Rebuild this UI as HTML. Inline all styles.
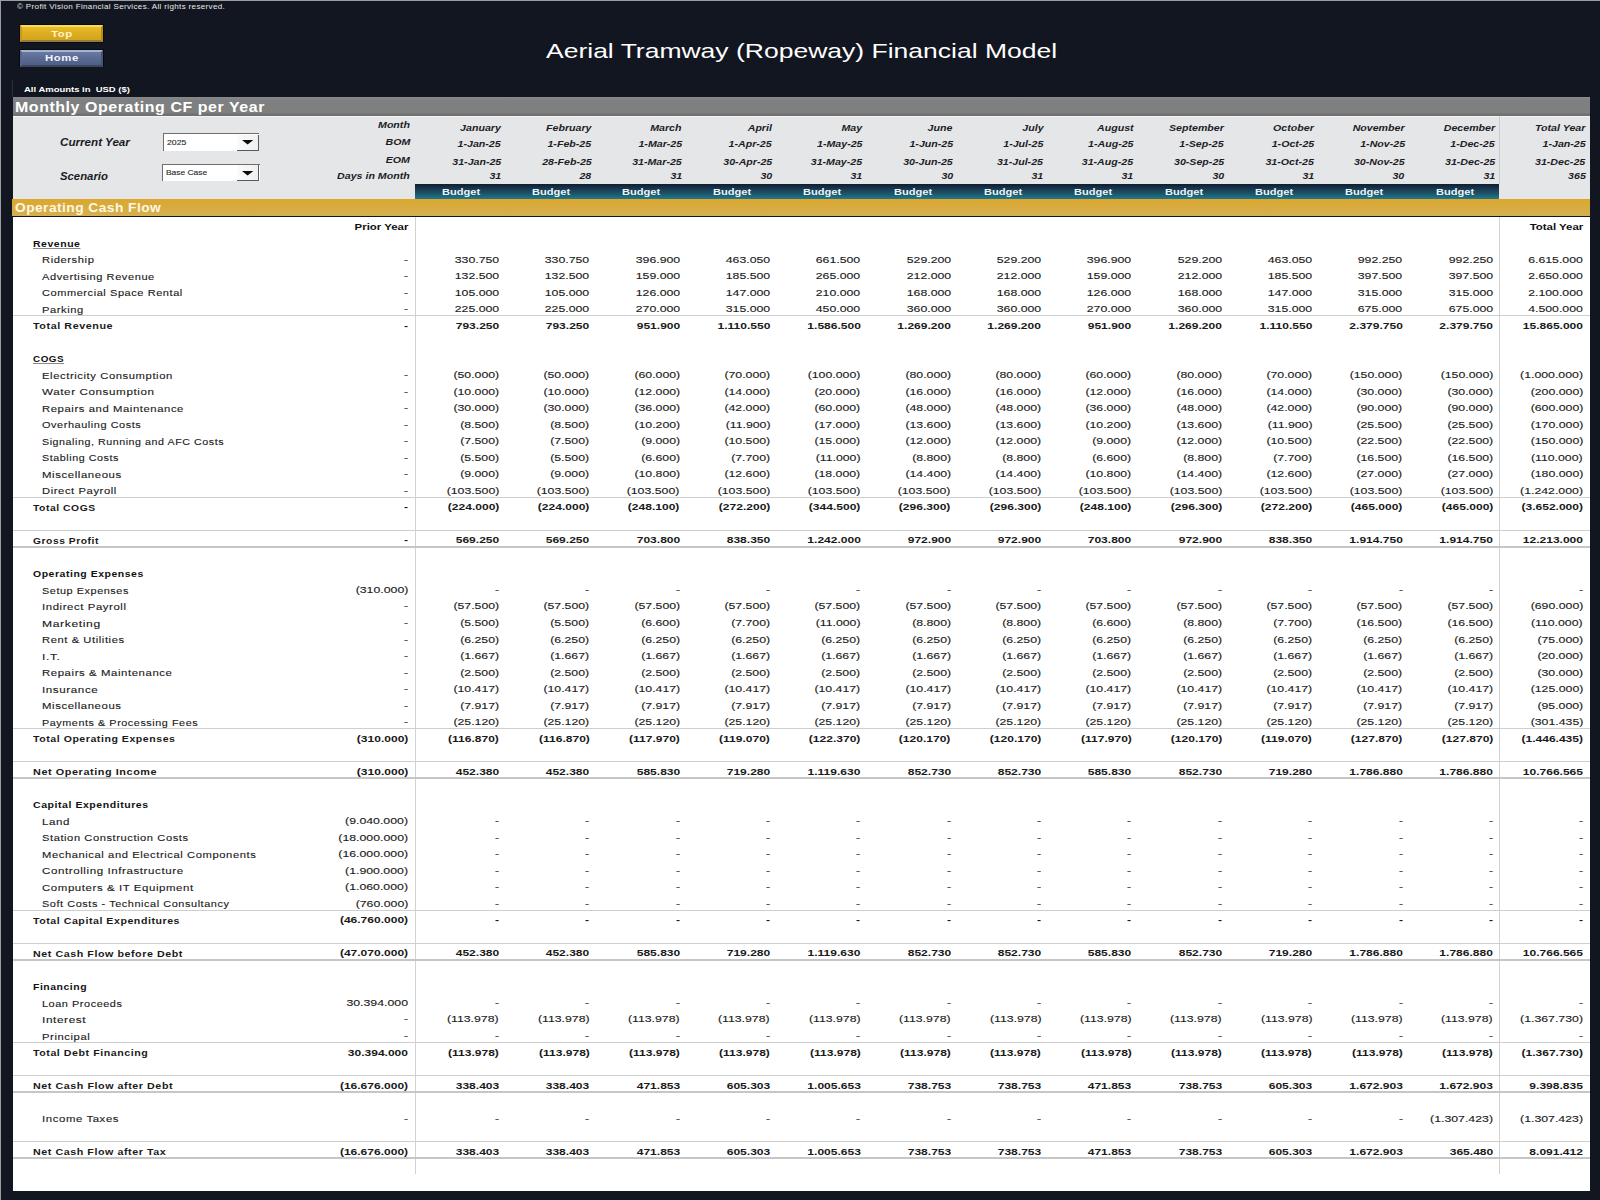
<!DOCTYPE html>
<html><head><meta charset="utf-8"><style>
html,body{margin:0;padding:0;}
body{width:1600px;height:1200px;position:relative;overflow:hidden;background:#121620;font-family:"Liberation Sans", sans-serif;}
.t{position:absolute;white-space:nowrap;}
.s{-webkit-text-stroke:0.12px currentColor;}
.b{position:absolute;}
</style></head><body>
<div class="b" style="left:0px;top:0px;width:1600px;height:1px;background:#9a9ca0;"></div>
<div class="b" style="left:0px;top:0px;width:1px;height:1200px;background:#9a9ca0;"></div>
<div class="t" style="top:2.85px;left:17.00px;transform-origin:0 50%;transform:scaleX(1.148);font-size:7px;line-height:8.05px;color:#e8e8e8;letter-spacing:0.3px">&copy; Profit Vision Financial Services. All rights reserved.</div>
<div class="b" style="left:19px;top:23.5px;width:85px;height:19.0px;background:#0a0a0a;"></div>
<div class="b" style="left:20px;top:24.5px;width:83px;height:17.5px;background:linear-gradient(#e8bc2a,#dcae20 50%,#d4a41c);box-sizing:border-box;border-top:2.5px solid #f6dc5c;border-bottom:2.5px solid #8e7c44;border-left:2.5px solid #c99a1a;border-right:2.5px solid #b88c18"></div>
<div class="t" style="top:28.71px;left:62.20px;transform-origin:50% 50%;transform:translateX(-50%) scaleX(1.250);font-size:9px;line-height:10.35px;color:#fff4c8;font-weight:bold;letter-spacing:0.5px">Top</div>
<div class="b" style="left:19px;top:49px;width:85px;height:18px;background:#0a0a0a;"></div>
<div class="b" style="left:20px;top:49.5px;width:83px;height:17.0px;background:linear-gradient(#6a7aa2,#5a6a92 50%,#4e5e86);box-sizing:border-box;border-top:2.5px solid #a4b4d6;border-bottom:2.5px solid #3a465e;border-left:2.5px solid #56668e;border-right:2.5px solid #46547a"></div>
<div class="t" style="top:53.31px;left:62.00px;transform-origin:50% 50%;transform:translateX(-50%) scaleX(1.260);font-size:9px;line-height:10.35px;color:#f4f6fc;font-weight:bold;letter-spacing:0.5px">Home</div>
<div class="t" style="top:38.72px;left:545.50px;transform-origin:0 50%;transform:scaleX(1.281);font-size:20.7px;line-height:23.80px;color:#ffffff">Aerial Tramway (Ropeway) Financial Model</div>
<div class="t" style="top:86.00px;left:23.50px;transform-origin:0 50%;transform:scaleX(1.247);font-size:7.6px;line-height:8.74px;color:#ffffff;font-weight:bold">All Amounts in&nbsp; USD ($)</div>
<div class="b" style="left:12px;top:80px;width:1px;height:17px;background:#2a2f3a;"></div>
<div class="b" style="left:13px;top:97px;width:1577px;height:19px;background:linear-gradient(#88898c 0,#7e7f80 20%,#7f7f7f 85%,#6f6f6f 90%,#727272 100%);"></div>
<div class="b" style="left:13px;top:116px;width:1577px;height:1px;background:#f4f4f6;"></div>
<div class="t" style="top:99.40px;left:15.20px;transform-origin:0 50%;transform:scaleX(1.138);font-size:14px;line-height:16.10px;color:#ffffff;font-weight:bold;letter-spacing:0.5px">Monthly Operating CF per Year</div>
<div class="b" style="left:13px;top:117px;width:1577px;height:82px;background:#e5e6e8;"></div>
<div class="b" style="left:414.5px;top:184px;width:1084.5px;height:14.800000000000011px;background:linear-gradient(#0f1e30 0,#1a3b52 35%,#1d5a70 70%,#217a8c 100%);"></div>
<div class="b" style="left:1499px;top:116px;width:1px;height:68px;background:#c9cbcf;"></div>
<div class="b" style="left:12px;top:199px;width:1578px;height:17.400000000000006px;background:linear-gradient(#dba72e,#d4b053);"></div>
<div class="t" style="top:201.74px;left:15.20px;transform-origin:0 50%;transform:scaleX(1.146);font-size:12px;line-height:13.80px;color:#fff8e0;font-weight:bold;letter-spacing:0.4px">Operating Cash Flow</div>
<div class="b" style="left:13px;top:216.5px;width:1577px;height:974.5px;background:#ffffff;"></div>
<div class="t" style="top:136.78px;left:59.80px;transform-origin:0 50%;transform:scaleX(1.164);font-size:10px;line-height:11.50px;color:#1b1b24;font-weight:bold;font-style:italic">Current Year</div>
<div class="t" style="top:170.78px;left:59.80px;transform-origin:0 50%;transform:scaleX(1.133);font-size:10px;line-height:11.50px;color:#1b1b24;font-weight:bold;font-style:italic">Scenario</div>
<div class="b" style="left:162.6px;top:133.2px;width:96.9px;height:18.200000000000017px;background:#ffffff;box-sizing:border-box;border-top:1.3px solid #6e6e6e;border-left:1.3px solid #6e6e6e"></div>
<div class="b" style="left:236.8px;top:134.5px;width:22.69999999999999px;height:16.900000000000006px;background:linear-gradient(90deg,#fafafa,#f0f0f0);box-sizing:border-box;border-right:1.5px solid #5a5a5a;border-bottom:1.5px solid #5a5a5a"></div>
<svg class="b" style="left:242px;top:140.4px" width="12" height="6"><polygon points="0,0 11.3,0 5.65,4.6" fill="#0a0a0a"/></svg>
<div class="t s" style="top:138.91px;left:166.80px;transform-origin:0 50%;transform:scaleX(1.120);font-size:7.8px;line-height:8.97px;color:#2a2a2a">2025</div>
<div class="b" style="left:161.5px;top:163.7px;width:98.0px;height:17.600000000000023px;background:#ffffff;box-sizing:border-box;border-top:1.3px solid #6e6e6e;border-left:1.3px solid #6e6e6e"></div>
<div class="b" style="left:236.8px;top:165.0px;width:22.69999999999999px;height:16.30000000000001px;background:linear-gradient(90deg,#fafafa,#f0f0f0);box-sizing:border-box;border-right:1.5px solid #5a5a5a;border-bottom:1.5px solid #5a5a5a"></div>
<svg class="b" style="left:242px;top:170.6px" width="12" height="6"><polygon points="0,0 11.3,0 5.65,4.6" fill="#0a0a0a"/></svg>
<div class="t s" style="top:169.31px;left:165.70px;transform-origin:0 50%;transform:scaleX(1.080);font-size:7.8px;line-height:8.97px;color:#2a2a2a">Base Case</div>
<div class="t" style="top:121.15px;right:1190.00px;transform-origin:100% 50%;transform:scaleX(1.280);font-size:8.3px;line-height:9.54px;color:#1d1d26;font-weight:bold;font-style:italic">Month</div>
<div class="t" style="top:123.65px;right:1099.00px;transform-origin:100% 50%;transform:scaleX(1.280);font-size:8.3px;line-height:9.54px;color:#1d1d26;font-weight:bold;font-style:italic">January</div>
<div class="t" style="top:123.65px;right:1008.64px;transform-origin:100% 50%;transform:scaleX(1.280);font-size:8.3px;line-height:9.54px;color:#1d1d26;font-weight:bold;font-style:italic">February</div>
<div class="t" style="top:123.65px;right:918.28px;transform-origin:100% 50%;transform:scaleX(1.280);font-size:8.3px;line-height:9.54px;color:#1d1d26;font-weight:bold;font-style:italic">March</div>
<div class="t" style="top:123.65px;right:827.92px;transform-origin:100% 50%;transform:scaleX(1.280);font-size:8.3px;line-height:9.54px;color:#1d1d26;font-weight:bold;font-style:italic">April</div>
<div class="t" style="top:123.65px;right:737.56px;transform-origin:100% 50%;transform:scaleX(1.280);font-size:8.3px;line-height:9.54px;color:#1d1d26;font-weight:bold;font-style:italic">May</div>
<div class="t" style="top:123.65px;right:647.20px;transform-origin:100% 50%;transform:scaleX(1.280);font-size:8.3px;line-height:9.54px;color:#1d1d26;font-weight:bold;font-style:italic">June</div>
<div class="t" style="top:123.65px;right:556.84px;transform-origin:100% 50%;transform:scaleX(1.280);font-size:8.3px;line-height:9.54px;color:#1d1d26;font-weight:bold;font-style:italic">July</div>
<div class="t" style="top:123.65px;right:466.48px;transform-origin:100% 50%;transform:scaleX(1.280);font-size:8.3px;line-height:9.54px;color:#1d1d26;font-weight:bold;font-style:italic">August</div>
<div class="t" style="top:123.65px;right:376.12px;transform-origin:100% 50%;transform:scaleX(1.280);font-size:8.3px;line-height:9.54px;color:#1d1d26;font-weight:bold;font-style:italic">September</div>
<div class="t" style="top:123.65px;right:285.76px;transform-origin:100% 50%;transform:scaleX(1.280);font-size:8.3px;line-height:9.54px;color:#1d1d26;font-weight:bold;font-style:italic">October</div>
<div class="t" style="top:123.65px;right:195.40px;transform-origin:100% 50%;transform:scaleX(1.280);font-size:8.3px;line-height:9.54px;color:#1d1d26;font-weight:bold;font-style:italic">November</div>
<div class="t" style="top:123.65px;right:105.04px;transform-origin:100% 50%;transform:scaleX(1.280);font-size:8.3px;line-height:9.54px;color:#1d1d26;font-weight:bold;font-style:italic">December</div>
<div class="t" style="top:123.65px;right:14.50px;transform-origin:100% 50%;transform:scaleX(1.280);font-size:8.3px;line-height:9.54px;color:#1d1d26;font-weight:bold;font-style:italic">Total Year</div>
<div class="t" style="top:138.45px;right:1190.00px;transform-origin:100% 50%;transform:scaleX(1.280);font-size:8.3px;line-height:9.54px;color:#1d1d26;font-weight:bold;font-style:italic">BOM</div>
<div class="t" style="top:139.95px;right:1099.00px;transform-origin:100% 50%;transform:scaleX(1.280);font-size:8.3px;line-height:9.54px;color:#1d1d26;font-weight:bold;font-style:italic">1-Jan-25</div>
<div class="t" style="top:139.95px;right:1008.64px;transform-origin:100% 50%;transform:scaleX(1.280);font-size:8.3px;line-height:9.54px;color:#1d1d26;font-weight:bold;font-style:italic">1-Feb-25</div>
<div class="t" style="top:139.95px;right:918.28px;transform-origin:100% 50%;transform:scaleX(1.280);font-size:8.3px;line-height:9.54px;color:#1d1d26;font-weight:bold;font-style:italic">1-Mar-25</div>
<div class="t" style="top:139.95px;right:827.92px;transform-origin:100% 50%;transform:scaleX(1.280);font-size:8.3px;line-height:9.54px;color:#1d1d26;font-weight:bold;font-style:italic">1-Apr-25</div>
<div class="t" style="top:139.95px;right:737.56px;transform-origin:100% 50%;transform:scaleX(1.280);font-size:8.3px;line-height:9.54px;color:#1d1d26;font-weight:bold;font-style:italic">1-May-25</div>
<div class="t" style="top:139.95px;right:647.20px;transform-origin:100% 50%;transform:scaleX(1.280);font-size:8.3px;line-height:9.54px;color:#1d1d26;font-weight:bold;font-style:italic">1-Jun-25</div>
<div class="t" style="top:139.95px;right:556.84px;transform-origin:100% 50%;transform:scaleX(1.280);font-size:8.3px;line-height:9.54px;color:#1d1d26;font-weight:bold;font-style:italic">1-Jul-25</div>
<div class="t" style="top:139.95px;right:466.48px;transform-origin:100% 50%;transform:scaleX(1.280);font-size:8.3px;line-height:9.54px;color:#1d1d26;font-weight:bold;font-style:italic">1-Aug-25</div>
<div class="t" style="top:139.95px;right:376.12px;transform-origin:100% 50%;transform:scaleX(1.280);font-size:8.3px;line-height:9.54px;color:#1d1d26;font-weight:bold;font-style:italic">1-Sep-25</div>
<div class="t" style="top:139.95px;right:285.76px;transform-origin:100% 50%;transform:scaleX(1.280);font-size:8.3px;line-height:9.54px;color:#1d1d26;font-weight:bold;font-style:italic">1-Oct-25</div>
<div class="t" style="top:139.95px;right:195.40px;transform-origin:100% 50%;transform:scaleX(1.280);font-size:8.3px;line-height:9.54px;color:#1d1d26;font-weight:bold;font-style:italic">1-Nov-25</div>
<div class="t" style="top:139.95px;right:105.04px;transform-origin:100% 50%;transform:scaleX(1.280);font-size:8.3px;line-height:9.54px;color:#1d1d26;font-weight:bold;font-style:italic">1-Dec-25</div>
<div class="t" style="top:139.95px;right:14.50px;transform-origin:100% 50%;transform:scaleX(1.280);font-size:8.3px;line-height:9.54px;color:#1d1d26;font-weight:bold;font-style:italic">1-Jan-25</div>
<div class="t" style="top:155.55px;right:1190.00px;transform-origin:100% 50%;transform:scaleX(1.280);font-size:8.3px;line-height:9.54px;color:#1d1d26;font-weight:bold;font-style:italic">EOM</div>
<div class="t" style="top:157.65px;right:1099.00px;transform-origin:100% 50%;transform:scaleX(1.280);font-size:8.3px;line-height:9.54px;color:#1d1d26;font-weight:bold;font-style:italic">31-Jan-25</div>
<div class="t" style="top:157.65px;right:1008.64px;transform-origin:100% 50%;transform:scaleX(1.280);font-size:8.3px;line-height:9.54px;color:#1d1d26;font-weight:bold;font-style:italic">28-Feb-25</div>
<div class="t" style="top:157.65px;right:918.28px;transform-origin:100% 50%;transform:scaleX(1.280);font-size:8.3px;line-height:9.54px;color:#1d1d26;font-weight:bold;font-style:italic">31-Mar-25</div>
<div class="t" style="top:157.65px;right:827.92px;transform-origin:100% 50%;transform:scaleX(1.280);font-size:8.3px;line-height:9.54px;color:#1d1d26;font-weight:bold;font-style:italic">30-Apr-25</div>
<div class="t" style="top:157.65px;right:737.56px;transform-origin:100% 50%;transform:scaleX(1.280);font-size:8.3px;line-height:9.54px;color:#1d1d26;font-weight:bold;font-style:italic">31-May-25</div>
<div class="t" style="top:157.65px;right:647.20px;transform-origin:100% 50%;transform:scaleX(1.280);font-size:8.3px;line-height:9.54px;color:#1d1d26;font-weight:bold;font-style:italic">30-Jun-25</div>
<div class="t" style="top:157.65px;right:556.84px;transform-origin:100% 50%;transform:scaleX(1.280);font-size:8.3px;line-height:9.54px;color:#1d1d26;font-weight:bold;font-style:italic">31-Jul-25</div>
<div class="t" style="top:157.65px;right:466.48px;transform-origin:100% 50%;transform:scaleX(1.280);font-size:8.3px;line-height:9.54px;color:#1d1d26;font-weight:bold;font-style:italic">31-Aug-25</div>
<div class="t" style="top:157.65px;right:376.12px;transform-origin:100% 50%;transform:scaleX(1.280);font-size:8.3px;line-height:9.54px;color:#1d1d26;font-weight:bold;font-style:italic">30-Sep-25</div>
<div class="t" style="top:157.65px;right:285.76px;transform-origin:100% 50%;transform:scaleX(1.280);font-size:8.3px;line-height:9.54px;color:#1d1d26;font-weight:bold;font-style:italic">31-Oct-25</div>
<div class="t" style="top:157.65px;right:195.40px;transform-origin:100% 50%;transform:scaleX(1.280);font-size:8.3px;line-height:9.54px;color:#1d1d26;font-weight:bold;font-style:italic">30-Nov-25</div>
<div class="t" style="top:157.65px;right:105.04px;transform-origin:100% 50%;transform:scaleX(1.280);font-size:8.3px;line-height:9.54px;color:#1d1d26;font-weight:bold;font-style:italic">31-Dec-25</div>
<div class="t" style="top:157.65px;right:14.50px;transform-origin:100% 50%;transform:scaleX(1.280);font-size:8.3px;line-height:9.54px;color:#1d1d26;font-weight:bold;font-style:italic">31-Dec-25</div>
<div class="t" style="top:172.05px;right:1190.00px;transform-origin:100% 50%;transform:scaleX(1.280);font-size:8.3px;line-height:9.54px;color:#1d1d26;font-weight:bold;font-style:italic">Days in Month</div>
<div class="t" style="top:172.45px;right:1099.00px;transform-origin:100% 50%;transform:scaleX(1.280);font-size:8.3px;line-height:9.54px;color:#1d1d26;font-weight:bold;font-style:italic">31</div>
<div class="t" style="top:172.45px;right:1008.64px;transform-origin:100% 50%;transform:scaleX(1.280);font-size:8.3px;line-height:9.54px;color:#1d1d26;font-weight:bold;font-style:italic">28</div>
<div class="t" style="top:172.45px;right:918.28px;transform-origin:100% 50%;transform:scaleX(1.280);font-size:8.3px;line-height:9.54px;color:#1d1d26;font-weight:bold;font-style:italic">31</div>
<div class="t" style="top:172.45px;right:827.92px;transform-origin:100% 50%;transform:scaleX(1.280);font-size:8.3px;line-height:9.54px;color:#1d1d26;font-weight:bold;font-style:italic">30</div>
<div class="t" style="top:172.45px;right:737.56px;transform-origin:100% 50%;transform:scaleX(1.280);font-size:8.3px;line-height:9.54px;color:#1d1d26;font-weight:bold;font-style:italic">31</div>
<div class="t" style="top:172.45px;right:647.20px;transform-origin:100% 50%;transform:scaleX(1.280);font-size:8.3px;line-height:9.54px;color:#1d1d26;font-weight:bold;font-style:italic">30</div>
<div class="t" style="top:172.45px;right:556.84px;transform-origin:100% 50%;transform:scaleX(1.280);font-size:8.3px;line-height:9.54px;color:#1d1d26;font-weight:bold;font-style:italic">31</div>
<div class="t" style="top:172.45px;right:466.48px;transform-origin:100% 50%;transform:scaleX(1.280);font-size:8.3px;line-height:9.54px;color:#1d1d26;font-weight:bold;font-style:italic">31</div>
<div class="t" style="top:172.45px;right:376.12px;transform-origin:100% 50%;transform:scaleX(1.280);font-size:8.3px;line-height:9.54px;color:#1d1d26;font-weight:bold;font-style:italic">30</div>
<div class="t" style="top:172.45px;right:285.76px;transform-origin:100% 50%;transform:scaleX(1.280);font-size:8.3px;line-height:9.54px;color:#1d1d26;font-weight:bold;font-style:italic">31</div>
<div class="t" style="top:172.45px;right:195.40px;transform-origin:100% 50%;transform:scaleX(1.280);font-size:8.3px;line-height:9.54px;color:#1d1d26;font-weight:bold;font-style:italic">30</div>
<div class="t" style="top:172.45px;right:105.04px;transform-origin:100% 50%;transform:scaleX(1.280);font-size:8.3px;line-height:9.54px;color:#1d1d26;font-weight:bold;font-style:italic">31</div>
<div class="t" style="top:172.45px;right:14.50px;transform-origin:100% 50%;transform:scaleX(1.280);font-size:8.3px;line-height:9.54px;color:#1d1d26;font-weight:bold;font-style:italic">365</div>
<div class="t" style="top:187.31px;left:460.75px;transform-origin:50% 50%;transform:translateX(-50%) scaleX(1.232);font-size:9px;line-height:10.35px;color:#e8f4f8;font-weight:bold">Budget</div>
<div class="t" style="top:187.31px;left:551.11px;transform-origin:50% 50%;transform:translateX(-50%) scaleX(1.232);font-size:9px;line-height:10.35px;color:#e8f4f8;font-weight:bold">Budget</div>
<div class="t" style="top:187.31px;left:641.47px;transform-origin:50% 50%;transform:translateX(-50%) scaleX(1.232);font-size:9px;line-height:10.35px;color:#e8f4f8;font-weight:bold">Budget</div>
<div class="t" style="top:187.31px;left:731.83px;transform-origin:50% 50%;transform:translateX(-50%) scaleX(1.232);font-size:9px;line-height:10.35px;color:#e8f4f8;font-weight:bold">Budget</div>
<div class="t" style="top:187.31px;left:822.19px;transform-origin:50% 50%;transform:translateX(-50%) scaleX(1.232);font-size:9px;line-height:10.35px;color:#e8f4f8;font-weight:bold">Budget</div>
<div class="t" style="top:187.31px;left:912.55px;transform-origin:50% 50%;transform:translateX(-50%) scaleX(1.232);font-size:9px;line-height:10.35px;color:#e8f4f8;font-weight:bold">Budget</div>
<div class="t" style="top:187.31px;left:1002.91px;transform-origin:50% 50%;transform:translateX(-50%) scaleX(1.232);font-size:9px;line-height:10.35px;color:#e8f4f8;font-weight:bold">Budget</div>
<div class="t" style="top:187.31px;left:1093.27px;transform-origin:50% 50%;transform:translateX(-50%) scaleX(1.232);font-size:9px;line-height:10.35px;color:#e8f4f8;font-weight:bold">Budget</div>
<div class="t" style="top:187.31px;left:1183.63px;transform-origin:50% 50%;transform:translateX(-50%) scaleX(1.232);font-size:9px;line-height:10.35px;color:#e8f4f8;font-weight:bold">Budget</div>
<div class="t" style="top:187.31px;left:1273.99px;transform-origin:50% 50%;transform:translateX(-50%) scaleX(1.232);font-size:9px;line-height:10.35px;color:#e8f4f8;font-weight:bold">Budget</div>
<div class="t" style="top:187.31px;left:1364.35px;transform-origin:50% 50%;transform:translateX(-50%) scaleX(1.232);font-size:9px;line-height:10.35px;color:#e8f4f8;font-weight:bold">Budget</div>
<div class="t" style="top:187.31px;left:1454.71px;transform-origin:50% 50%;transform:translateX(-50%) scaleX(1.232);font-size:9px;line-height:10.35px;color:#e8f4f8;font-weight:bold">Budget</div>
<div class="b" style="left:414.5px;top:216.5px;width:1.5px;height:957.5px;background:#d2d2d2;"></div>
<div class="b" style="left:1498.5px;top:216.5px;width:1.5px;height:957.5px;background:#d2d2d2;"></div>
<div class="b" style="left:13px;top:315.02px;width:1577px;height:1.0px;background:#cfcfcf;"></div>
<div class="b" style="left:13px;top:496.74px;width:1577px;height:1.0px;background:#cfcfcf;"></div>
<div class="b" style="left:13px;top:529.78px;width:1577px;height:1.0px;background:#cfcfcf;"></div>
<div class="b" style="left:13px;top:728.02px;width:1577px;height:1.0px;background:#cfcfcf;"></div>
<div class="b" style="left:13px;top:761.06px;width:1577px;height:1.0px;background:#cfcfcf;"></div>
<div class="b" style="left:13px;top:909.74px;width:1577px;height:1.0px;background:#cfcfcf;"></div>
<div class="b" style="left:13px;top:942.78px;width:1577px;height:1.0px;background:#cfcfcf;"></div>
<div class="b" style="left:13px;top:1041.9px;width:1577px;height:1.0px;background:#cfcfcf;"></div>
<div class="b" style="left:13px;top:1074.94px;width:1577px;height:1.0px;background:#cfcfcf;"></div>
<div class="b" style="left:13px;top:1141.02px;width:1577px;height:1.0px;background:#cfcfcf;"></div>
<div class="b" style="left:13px;top:545.8px;width:1577px;height:2.0px;background:#c6c6c6;"></div>
<div class="b" style="left:13px;top:777.0799999999999px;width:1577px;height:2.0px;background:#c6c6c6;"></div>
<div class="b" style="left:13px;top:958.8px;width:1577px;height:2.0px;background:#c6c6c6;"></div>
<div class="b" style="left:13px;top:1090.96px;width:1577px;height:2.0px;background:#c6c6c6;"></div>
<div class="b" style="left:13px;top:1157.04px;width:1577px;height:2.0px;background:#c6c6c6;"></div>
<div class="t" style="top:221.59px;right:1191.40px;transform-origin:100% 50%;transform:scaleX(1.300);font-size:8.8px;line-height:10.12px;color:#111;font-weight:bold">Prior Year</div>
<div class="t" style="top:221.59px;right:16.40px;transform-origin:100% 50%;transform:scaleX(1.300);font-size:8.8px;line-height:10.12px;color:#111;font-weight:bold">Total Year</div>
<div class="t" style="top:237.67px;left:33.00px;transform-origin:0 50%;transform:scaleX(1.091);font-size:9.6px;line-height:11.04px;color:#111;font-weight:bold;letter-spacing:0.5px;text-decoration:underline;text-decoration-color:#8a8a8a;text-decoration-thickness:1px;text-underline-offset:1px">Revenue</div>
<div class="t s" style="top:254.19px;left:42.00px;transform-origin:0 50%;transform:scaleX(1.165);font-size:9.6px;line-height:11.04px;color:#1a1a1a;letter-spacing:0.5px">Ridership</div>
<div class="t s" style="top:254.56px;right:1191.70px;transform-origin:100% 50%;transform:scaleX(1.339);font-size:9.2px;line-height:10.58px;color:#4a4a4a">-</div>
<div class="t s" style="top:254.56px;right:1101.00px;transform-origin:100% 50%;transform:scaleX(1.339);font-size:9.2px;line-height:10.58px;color:#1a1a1a">330.750</div>
<div class="t s" style="top:254.56px;right:1010.64px;transform-origin:100% 50%;transform:scaleX(1.339);font-size:9.2px;line-height:10.58px;color:#1a1a1a">330.750</div>
<div class="t s" style="top:254.56px;right:920.28px;transform-origin:100% 50%;transform:scaleX(1.339);font-size:9.2px;line-height:10.58px;color:#1a1a1a">396.900</div>
<div class="t s" style="top:254.56px;right:829.92px;transform-origin:100% 50%;transform:scaleX(1.339);font-size:9.2px;line-height:10.58px;color:#1a1a1a">463.050</div>
<div class="t s" style="top:254.56px;right:739.56px;transform-origin:100% 50%;transform:scaleX(1.339);font-size:9.2px;line-height:10.58px;color:#1a1a1a">661.500</div>
<div class="t s" style="top:254.56px;right:649.20px;transform-origin:100% 50%;transform:scaleX(1.339);font-size:9.2px;line-height:10.58px;color:#1a1a1a">529.200</div>
<div class="t s" style="top:254.56px;right:558.84px;transform-origin:100% 50%;transform:scaleX(1.339);font-size:9.2px;line-height:10.58px;color:#1a1a1a">529.200</div>
<div class="t s" style="top:254.56px;right:468.48px;transform-origin:100% 50%;transform:scaleX(1.339);font-size:9.2px;line-height:10.58px;color:#1a1a1a">396.900</div>
<div class="t s" style="top:254.56px;right:378.12px;transform-origin:100% 50%;transform:scaleX(1.339);font-size:9.2px;line-height:10.58px;color:#1a1a1a">529.200</div>
<div class="t s" style="top:254.56px;right:287.76px;transform-origin:100% 50%;transform:scaleX(1.339);font-size:9.2px;line-height:10.58px;color:#1a1a1a">463.050</div>
<div class="t s" style="top:254.56px;right:197.40px;transform-origin:100% 50%;transform:scaleX(1.339);font-size:9.2px;line-height:10.58px;color:#1a1a1a">992.250</div>
<div class="t s" style="top:254.56px;right:107.04px;transform-origin:100% 50%;transform:scaleX(1.339);font-size:9.2px;line-height:10.58px;color:#1a1a1a">992.250</div>
<div class="t s" style="top:254.56px;right:17.00px;transform-origin:100% 50%;transform:scaleX(1.339);font-size:9.2px;line-height:10.58px;color:#1a1a1a">6.615.000</div>
<div class="t s" style="top:270.71px;left:42.00px;transform-origin:0 50%;transform:scaleX(1.151);font-size:9.6px;line-height:11.04px;color:#1a1a1a;letter-spacing:0.5px">Advertising Revenue</div>
<div class="t s" style="top:271.08px;right:1191.70px;transform-origin:100% 50%;transform:scaleX(1.339);font-size:9.2px;line-height:10.58px;color:#4a4a4a">-</div>
<div class="t s" style="top:271.08px;right:1101.00px;transform-origin:100% 50%;transform:scaleX(1.339);font-size:9.2px;line-height:10.58px;color:#1a1a1a">132.500</div>
<div class="t s" style="top:271.08px;right:1010.64px;transform-origin:100% 50%;transform:scaleX(1.339);font-size:9.2px;line-height:10.58px;color:#1a1a1a">132.500</div>
<div class="t s" style="top:271.08px;right:920.28px;transform-origin:100% 50%;transform:scaleX(1.339);font-size:9.2px;line-height:10.58px;color:#1a1a1a">159.000</div>
<div class="t s" style="top:271.08px;right:829.92px;transform-origin:100% 50%;transform:scaleX(1.339);font-size:9.2px;line-height:10.58px;color:#1a1a1a">185.500</div>
<div class="t s" style="top:271.08px;right:739.56px;transform-origin:100% 50%;transform:scaleX(1.339);font-size:9.2px;line-height:10.58px;color:#1a1a1a">265.000</div>
<div class="t s" style="top:271.08px;right:649.20px;transform-origin:100% 50%;transform:scaleX(1.339);font-size:9.2px;line-height:10.58px;color:#1a1a1a">212.000</div>
<div class="t s" style="top:271.08px;right:558.84px;transform-origin:100% 50%;transform:scaleX(1.339);font-size:9.2px;line-height:10.58px;color:#1a1a1a">212.000</div>
<div class="t s" style="top:271.08px;right:468.48px;transform-origin:100% 50%;transform:scaleX(1.339);font-size:9.2px;line-height:10.58px;color:#1a1a1a">159.000</div>
<div class="t s" style="top:271.08px;right:378.12px;transform-origin:100% 50%;transform:scaleX(1.339);font-size:9.2px;line-height:10.58px;color:#1a1a1a">212.000</div>
<div class="t s" style="top:271.08px;right:287.76px;transform-origin:100% 50%;transform:scaleX(1.339);font-size:9.2px;line-height:10.58px;color:#1a1a1a">185.500</div>
<div class="t s" style="top:271.08px;right:197.40px;transform-origin:100% 50%;transform:scaleX(1.339);font-size:9.2px;line-height:10.58px;color:#1a1a1a">397.500</div>
<div class="t s" style="top:271.08px;right:107.04px;transform-origin:100% 50%;transform:scaleX(1.339);font-size:9.2px;line-height:10.58px;color:#1a1a1a">397.500</div>
<div class="t s" style="top:271.08px;right:17.00px;transform-origin:100% 50%;transform:scaleX(1.339);font-size:9.2px;line-height:10.58px;color:#1a1a1a">2.650.000</div>
<div class="t s" style="top:287.23px;left:42.00px;transform-origin:0 50%;transform:scaleX(1.146);font-size:9.6px;line-height:11.04px;color:#1a1a1a;letter-spacing:0.5px">Commercial Space Rental</div>
<div class="t s" style="top:287.60px;right:1191.70px;transform-origin:100% 50%;transform:scaleX(1.339);font-size:9.2px;line-height:10.58px;color:#4a4a4a">-</div>
<div class="t s" style="top:287.60px;right:1101.00px;transform-origin:100% 50%;transform:scaleX(1.339);font-size:9.2px;line-height:10.58px;color:#1a1a1a">105.000</div>
<div class="t s" style="top:287.60px;right:1010.64px;transform-origin:100% 50%;transform:scaleX(1.339);font-size:9.2px;line-height:10.58px;color:#1a1a1a">105.000</div>
<div class="t s" style="top:287.60px;right:920.28px;transform-origin:100% 50%;transform:scaleX(1.339);font-size:9.2px;line-height:10.58px;color:#1a1a1a">126.000</div>
<div class="t s" style="top:287.60px;right:829.92px;transform-origin:100% 50%;transform:scaleX(1.339);font-size:9.2px;line-height:10.58px;color:#1a1a1a">147.000</div>
<div class="t s" style="top:287.60px;right:739.56px;transform-origin:100% 50%;transform:scaleX(1.339);font-size:9.2px;line-height:10.58px;color:#1a1a1a">210.000</div>
<div class="t s" style="top:287.60px;right:649.20px;transform-origin:100% 50%;transform:scaleX(1.339);font-size:9.2px;line-height:10.58px;color:#1a1a1a">168.000</div>
<div class="t s" style="top:287.60px;right:558.84px;transform-origin:100% 50%;transform:scaleX(1.339);font-size:9.2px;line-height:10.58px;color:#1a1a1a">168.000</div>
<div class="t s" style="top:287.60px;right:468.48px;transform-origin:100% 50%;transform:scaleX(1.339);font-size:9.2px;line-height:10.58px;color:#1a1a1a">126.000</div>
<div class="t s" style="top:287.60px;right:378.12px;transform-origin:100% 50%;transform:scaleX(1.339);font-size:9.2px;line-height:10.58px;color:#1a1a1a">168.000</div>
<div class="t s" style="top:287.60px;right:287.76px;transform-origin:100% 50%;transform:scaleX(1.339);font-size:9.2px;line-height:10.58px;color:#1a1a1a">147.000</div>
<div class="t s" style="top:287.60px;right:197.40px;transform-origin:100% 50%;transform:scaleX(1.339);font-size:9.2px;line-height:10.58px;color:#1a1a1a">315.000</div>
<div class="t s" style="top:287.60px;right:107.04px;transform-origin:100% 50%;transform:scaleX(1.339);font-size:9.2px;line-height:10.58px;color:#1a1a1a">315.000</div>
<div class="t s" style="top:287.60px;right:17.00px;transform-origin:100% 50%;transform:scaleX(1.339);font-size:9.2px;line-height:10.58px;color:#1a1a1a">2.100.000</div>
<div class="t s" style="top:303.75px;left:42.00px;transform-origin:0 50%;transform:scaleX(1.159);font-size:9.6px;line-height:11.04px;color:#1a1a1a;letter-spacing:0.5px">Parking</div>
<div class="t s" style="top:304.12px;right:1191.70px;transform-origin:100% 50%;transform:scaleX(1.339);font-size:9.2px;line-height:10.58px;color:#4a4a4a">-</div>
<div class="t s" style="top:304.12px;right:1101.00px;transform-origin:100% 50%;transform:scaleX(1.339);font-size:9.2px;line-height:10.58px;color:#1a1a1a">225.000</div>
<div class="t s" style="top:304.12px;right:1010.64px;transform-origin:100% 50%;transform:scaleX(1.339);font-size:9.2px;line-height:10.58px;color:#1a1a1a">225.000</div>
<div class="t s" style="top:304.12px;right:920.28px;transform-origin:100% 50%;transform:scaleX(1.339);font-size:9.2px;line-height:10.58px;color:#1a1a1a">270.000</div>
<div class="t s" style="top:304.12px;right:829.92px;transform-origin:100% 50%;transform:scaleX(1.339);font-size:9.2px;line-height:10.58px;color:#1a1a1a">315.000</div>
<div class="t s" style="top:304.12px;right:739.56px;transform-origin:100% 50%;transform:scaleX(1.339);font-size:9.2px;line-height:10.58px;color:#1a1a1a">450.000</div>
<div class="t s" style="top:304.12px;right:649.20px;transform-origin:100% 50%;transform:scaleX(1.339);font-size:9.2px;line-height:10.58px;color:#1a1a1a">360.000</div>
<div class="t s" style="top:304.12px;right:558.84px;transform-origin:100% 50%;transform:scaleX(1.339);font-size:9.2px;line-height:10.58px;color:#1a1a1a">360.000</div>
<div class="t s" style="top:304.12px;right:468.48px;transform-origin:100% 50%;transform:scaleX(1.339);font-size:9.2px;line-height:10.58px;color:#1a1a1a">270.000</div>
<div class="t s" style="top:304.12px;right:378.12px;transform-origin:100% 50%;transform:scaleX(1.339);font-size:9.2px;line-height:10.58px;color:#1a1a1a">360.000</div>
<div class="t s" style="top:304.12px;right:287.76px;transform-origin:100% 50%;transform:scaleX(1.339);font-size:9.2px;line-height:10.58px;color:#1a1a1a">315.000</div>
<div class="t s" style="top:304.12px;right:197.40px;transform-origin:100% 50%;transform:scaleX(1.339);font-size:9.2px;line-height:10.58px;color:#1a1a1a">675.000</div>
<div class="t s" style="top:304.12px;right:107.04px;transform-origin:100% 50%;transform:scaleX(1.339);font-size:9.2px;line-height:10.58px;color:#1a1a1a">675.000</div>
<div class="t s" style="top:304.12px;right:17.00px;transform-origin:100% 50%;transform:scaleX(1.339);font-size:9.2px;line-height:10.58px;color:#1a1a1a">4.500.000</div>
<div class="t" style="top:320.27px;left:33.00px;transform-origin:0 50%;transform:scaleX(1.123);font-size:9.6px;line-height:11.04px;color:#1a1a1a;font-weight:bold;letter-spacing:0.5px">Total Revenue</div>
<div class="t" style="top:320.64px;right:1191.70px;transform-origin:100% 50%;transform:scaleX(1.309);font-size:9.2px;line-height:10.58px;color:#1a1a1a;font-weight:bold">-</div>
<div class="t" style="top:320.64px;right:1101.00px;transform-origin:100% 50%;transform:scaleX(1.309);font-size:9.2px;line-height:10.58px;color:#1a1a1a;font-weight:bold">793.250</div>
<div class="t" style="top:320.64px;right:1010.64px;transform-origin:100% 50%;transform:scaleX(1.309);font-size:9.2px;line-height:10.58px;color:#1a1a1a;font-weight:bold">793.250</div>
<div class="t" style="top:320.64px;right:920.28px;transform-origin:100% 50%;transform:scaleX(1.309);font-size:9.2px;line-height:10.58px;color:#1a1a1a;font-weight:bold">951.900</div>
<div class="t" style="top:320.64px;right:829.92px;transform-origin:100% 50%;transform:scaleX(1.309);font-size:9.2px;line-height:10.58px;color:#1a1a1a;font-weight:bold">1.110.550</div>
<div class="t" style="top:320.64px;right:739.56px;transform-origin:100% 50%;transform:scaleX(1.309);font-size:9.2px;line-height:10.58px;color:#1a1a1a;font-weight:bold">1.586.500</div>
<div class="t" style="top:320.64px;right:649.20px;transform-origin:100% 50%;transform:scaleX(1.309);font-size:9.2px;line-height:10.58px;color:#1a1a1a;font-weight:bold">1.269.200</div>
<div class="t" style="top:320.64px;right:558.84px;transform-origin:100% 50%;transform:scaleX(1.309);font-size:9.2px;line-height:10.58px;color:#1a1a1a;font-weight:bold">1.269.200</div>
<div class="t" style="top:320.64px;right:468.48px;transform-origin:100% 50%;transform:scaleX(1.309);font-size:9.2px;line-height:10.58px;color:#1a1a1a;font-weight:bold">951.900</div>
<div class="t" style="top:320.64px;right:378.12px;transform-origin:100% 50%;transform:scaleX(1.309);font-size:9.2px;line-height:10.58px;color:#1a1a1a;font-weight:bold">1.269.200</div>
<div class="t" style="top:320.64px;right:287.76px;transform-origin:100% 50%;transform:scaleX(1.309);font-size:9.2px;line-height:10.58px;color:#1a1a1a;font-weight:bold">1.110.550</div>
<div class="t" style="top:320.64px;right:197.40px;transform-origin:100% 50%;transform:scaleX(1.309);font-size:9.2px;line-height:10.58px;color:#1a1a1a;font-weight:bold">2.379.750</div>
<div class="t" style="top:320.64px;right:107.04px;transform-origin:100% 50%;transform:scaleX(1.309);font-size:9.2px;line-height:10.58px;color:#1a1a1a;font-weight:bold">2.379.750</div>
<div class="t" style="top:320.64px;right:17.00px;transform-origin:100% 50%;transform:scaleX(1.309);font-size:9.2px;line-height:10.58px;color:#1a1a1a;font-weight:bold">15.865.000</div>
<div class="t" style="top:353.31px;left:33.00px;transform-origin:0 50%;transform:scaleX(1.029);font-size:9.6px;line-height:11.04px;color:#111;font-weight:bold;letter-spacing:0.5px;text-decoration:underline;text-decoration-color:#8a8a8a;text-decoration-thickness:1px;text-underline-offset:1px">COGS</div>
<div class="t s" style="top:369.83px;left:42.00px;transform-origin:0 50%;transform:scaleX(1.171);font-size:9.6px;line-height:11.04px;color:#1a1a1a;letter-spacing:0.5px">Electricity Consumption</div>
<div class="t s" style="top:370.20px;right:1191.70px;transform-origin:100% 50%;transform:scaleX(1.339);font-size:9.2px;line-height:10.58px;color:#4a4a4a">-</div>
<div class="t s" style="top:370.20px;right:1101.00px;transform-origin:100% 50%;transform:scaleX(1.339);font-size:9.2px;line-height:10.58px;color:#1a1a1a">(50.000)</div>
<div class="t s" style="top:370.20px;right:1010.64px;transform-origin:100% 50%;transform:scaleX(1.339);font-size:9.2px;line-height:10.58px;color:#1a1a1a">(50.000)</div>
<div class="t s" style="top:370.20px;right:920.28px;transform-origin:100% 50%;transform:scaleX(1.339);font-size:9.2px;line-height:10.58px;color:#1a1a1a">(60.000)</div>
<div class="t s" style="top:370.20px;right:829.92px;transform-origin:100% 50%;transform:scaleX(1.339);font-size:9.2px;line-height:10.58px;color:#1a1a1a">(70.000)</div>
<div class="t s" style="top:370.20px;right:739.56px;transform-origin:100% 50%;transform:scaleX(1.339);font-size:9.2px;line-height:10.58px;color:#1a1a1a">(100.000)</div>
<div class="t s" style="top:370.20px;right:649.20px;transform-origin:100% 50%;transform:scaleX(1.339);font-size:9.2px;line-height:10.58px;color:#1a1a1a">(80.000)</div>
<div class="t s" style="top:370.20px;right:558.84px;transform-origin:100% 50%;transform:scaleX(1.339);font-size:9.2px;line-height:10.58px;color:#1a1a1a">(80.000)</div>
<div class="t s" style="top:370.20px;right:468.48px;transform-origin:100% 50%;transform:scaleX(1.339);font-size:9.2px;line-height:10.58px;color:#1a1a1a">(60.000)</div>
<div class="t s" style="top:370.20px;right:378.12px;transform-origin:100% 50%;transform:scaleX(1.339);font-size:9.2px;line-height:10.58px;color:#1a1a1a">(80.000)</div>
<div class="t s" style="top:370.20px;right:287.76px;transform-origin:100% 50%;transform:scaleX(1.339);font-size:9.2px;line-height:10.58px;color:#1a1a1a">(70.000)</div>
<div class="t s" style="top:370.20px;right:197.40px;transform-origin:100% 50%;transform:scaleX(1.339);font-size:9.2px;line-height:10.58px;color:#1a1a1a">(150.000)</div>
<div class="t s" style="top:370.20px;right:107.04px;transform-origin:100% 50%;transform:scaleX(1.339);font-size:9.2px;line-height:10.58px;color:#1a1a1a">(150.000)</div>
<div class="t s" style="top:370.20px;right:17.00px;transform-origin:100% 50%;transform:scaleX(1.339);font-size:9.2px;line-height:10.58px;color:#1a1a1a">(1.000.000)</div>
<div class="t s" style="top:386.35px;left:42.00px;transform-origin:0 50%;transform:scaleX(1.212);font-size:9.6px;line-height:11.04px;color:#1a1a1a;letter-spacing:0.5px">Water Consumption</div>
<div class="t s" style="top:386.72px;right:1191.70px;transform-origin:100% 50%;transform:scaleX(1.339);font-size:9.2px;line-height:10.58px;color:#4a4a4a">-</div>
<div class="t s" style="top:386.72px;right:1101.00px;transform-origin:100% 50%;transform:scaleX(1.339);font-size:9.2px;line-height:10.58px;color:#1a1a1a">(10.000)</div>
<div class="t s" style="top:386.72px;right:1010.64px;transform-origin:100% 50%;transform:scaleX(1.339);font-size:9.2px;line-height:10.58px;color:#1a1a1a">(10.000)</div>
<div class="t s" style="top:386.72px;right:920.28px;transform-origin:100% 50%;transform:scaleX(1.339);font-size:9.2px;line-height:10.58px;color:#1a1a1a">(12.000)</div>
<div class="t s" style="top:386.72px;right:829.92px;transform-origin:100% 50%;transform:scaleX(1.339);font-size:9.2px;line-height:10.58px;color:#1a1a1a">(14.000)</div>
<div class="t s" style="top:386.72px;right:739.56px;transform-origin:100% 50%;transform:scaleX(1.339);font-size:9.2px;line-height:10.58px;color:#1a1a1a">(20.000)</div>
<div class="t s" style="top:386.72px;right:649.20px;transform-origin:100% 50%;transform:scaleX(1.339);font-size:9.2px;line-height:10.58px;color:#1a1a1a">(16.000)</div>
<div class="t s" style="top:386.72px;right:558.84px;transform-origin:100% 50%;transform:scaleX(1.339);font-size:9.2px;line-height:10.58px;color:#1a1a1a">(16.000)</div>
<div class="t s" style="top:386.72px;right:468.48px;transform-origin:100% 50%;transform:scaleX(1.339);font-size:9.2px;line-height:10.58px;color:#1a1a1a">(12.000)</div>
<div class="t s" style="top:386.72px;right:378.12px;transform-origin:100% 50%;transform:scaleX(1.339);font-size:9.2px;line-height:10.58px;color:#1a1a1a">(16.000)</div>
<div class="t s" style="top:386.72px;right:287.76px;transform-origin:100% 50%;transform:scaleX(1.339);font-size:9.2px;line-height:10.58px;color:#1a1a1a">(14.000)</div>
<div class="t s" style="top:386.72px;right:197.40px;transform-origin:100% 50%;transform:scaleX(1.339);font-size:9.2px;line-height:10.58px;color:#1a1a1a">(30.000)</div>
<div class="t s" style="top:386.72px;right:107.04px;transform-origin:100% 50%;transform:scaleX(1.339);font-size:9.2px;line-height:10.58px;color:#1a1a1a">(30.000)</div>
<div class="t s" style="top:386.72px;right:17.00px;transform-origin:100% 50%;transform:scaleX(1.339);font-size:9.2px;line-height:10.58px;color:#1a1a1a">(200.000)</div>
<div class="t s" style="top:402.87px;left:42.00px;transform-origin:0 50%;transform:scaleX(1.175);font-size:9.6px;line-height:11.04px;color:#1a1a1a;letter-spacing:0.5px">Repairs and Maintenance</div>
<div class="t s" style="top:403.24px;right:1191.70px;transform-origin:100% 50%;transform:scaleX(1.339);font-size:9.2px;line-height:10.58px;color:#4a4a4a">-</div>
<div class="t s" style="top:403.24px;right:1101.00px;transform-origin:100% 50%;transform:scaleX(1.339);font-size:9.2px;line-height:10.58px;color:#1a1a1a">(30.000)</div>
<div class="t s" style="top:403.24px;right:1010.64px;transform-origin:100% 50%;transform:scaleX(1.339);font-size:9.2px;line-height:10.58px;color:#1a1a1a">(30.000)</div>
<div class="t s" style="top:403.24px;right:920.28px;transform-origin:100% 50%;transform:scaleX(1.339);font-size:9.2px;line-height:10.58px;color:#1a1a1a">(36.000)</div>
<div class="t s" style="top:403.24px;right:829.92px;transform-origin:100% 50%;transform:scaleX(1.339);font-size:9.2px;line-height:10.58px;color:#1a1a1a">(42.000)</div>
<div class="t s" style="top:403.24px;right:739.56px;transform-origin:100% 50%;transform:scaleX(1.339);font-size:9.2px;line-height:10.58px;color:#1a1a1a">(60.000)</div>
<div class="t s" style="top:403.24px;right:649.20px;transform-origin:100% 50%;transform:scaleX(1.339);font-size:9.2px;line-height:10.58px;color:#1a1a1a">(48.000)</div>
<div class="t s" style="top:403.24px;right:558.84px;transform-origin:100% 50%;transform:scaleX(1.339);font-size:9.2px;line-height:10.58px;color:#1a1a1a">(48.000)</div>
<div class="t s" style="top:403.24px;right:468.48px;transform-origin:100% 50%;transform:scaleX(1.339);font-size:9.2px;line-height:10.58px;color:#1a1a1a">(36.000)</div>
<div class="t s" style="top:403.24px;right:378.12px;transform-origin:100% 50%;transform:scaleX(1.339);font-size:9.2px;line-height:10.58px;color:#1a1a1a">(48.000)</div>
<div class="t s" style="top:403.24px;right:287.76px;transform-origin:100% 50%;transform:scaleX(1.339);font-size:9.2px;line-height:10.58px;color:#1a1a1a">(42.000)</div>
<div class="t s" style="top:403.24px;right:197.40px;transform-origin:100% 50%;transform:scaleX(1.339);font-size:9.2px;line-height:10.58px;color:#1a1a1a">(90.000)</div>
<div class="t s" style="top:403.24px;right:107.04px;transform-origin:100% 50%;transform:scaleX(1.339);font-size:9.2px;line-height:10.58px;color:#1a1a1a">(90.000)</div>
<div class="t s" style="top:403.24px;right:17.00px;transform-origin:100% 50%;transform:scaleX(1.339);font-size:9.2px;line-height:10.58px;color:#1a1a1a">(600.000)</div>
<div class="t s" style="top:419.39px;left:42.00px;transform-origin:0 50%;transform:scaleX(1.137);font-size:9.6px;line-height:11.04px;color:#1a1a1a;letter-spacing:0.5px">Overhauling Costs</div>
<div class="t s" style="top:419.76px;right:1191.70px;transform-origin:100% 50%;transform:scaleX(1.339);font-size:9.2px;line-height:10.58px;color:#4a4a4a">-</div>
<div class="t s" style="top:419.76px;right:1101.00px;transform-origin:100% 50%;transform:scaleX(1.339);font-size:9.2px;line-height:10.58px;color:#1a1a1a">(8.500)</div>
<div class="t s" style="top:419.76px;right:1010.64px;transform-origin:100% 50%;transform:scaleX(1.339);font-size:9.2px;line-height:10.58px;color:#1a1a1a">(8.500)</div>
<div class="t s" style="top:419.76px;right:920.28px;transform-origin:100% 50%;transform:scaleX(1.339);font-size:9.2px;line-height:10.58px;color:#1a1a1a">(10.200)</div>
<div class="t s" style="top:419.76px;right:829.92px;transform-origin:100% 50%;transform:scaleX(1.339);font-size:9.2px;line-height:10.58px;color:#1a1a1a">(11.900)</div>
<div class="t s" style="top:419.76px;right:739.56px;transform-origin:100% 50%;transform:scaleX(1.339);font-size:9.2px;line-height:10.58px;color:#1a1a1a">(17.000)</div>
<div class="t s" style="top:419.76px;right:649.20px;transform-origin:100% 50%;transform:scaleX(1.339);font-size:9.2px;line-height:10.58px;color:#1a1a1a">(13.600)</div>
<div class="t s" style="top:419.76px;right:558.84px;transform-origin:100% 50%;transform:scaleX(1.339);font-size:9.2px;line-height:10.58px;color:#1a1a1a">(13.600)</div>
<div class="t s" style="top:419.76px;right:468.48px;transform-origin:100% 50%;transform:scaleX(1.339);font-size:9.2px;line-height:10.58px;color:#1a1a1a">(10.200)</div>
<div class="t s" style="top:419.76px;right:378.12px;transform-origin:100% 50%;transform:scaleX(1.339);font-size:9.2px;line-height:10.58px;color:#1a1a1a">(13.600)</div>
<div class="t s" style="top:419.76px;right:287.76px;transform-origin:100% 50%;transform:scaleX(1.339);font-size:9.2px;line-height:10.58px;color:#1a1a1a">(11.900)</div>
<div class="t s" style="top:419.76px;right:197.40px;transform-origin:100% 50%;transform:scaleX(1.339);font-size:9.2px;line-height:10.58px;color:#1a1a1a">(25.500)</div>
<div class="t s" style="top:419.76px;right:107.04px;transform-origin:100% 50%;transform:scaleX(1.339);font-size:9.2px;line-height:10.58px;color:#1a1a1a">(25.500)</div>
<div class="t s" style="top:419.76px;right:17.00px;transform-origin:100% 50%;transform:scaleX(1.339);font-size:9.2px;line-height:10.58px;color:#1a1a1a">(170.000)</div>
<div class="t s" style="top:435.91px;left:42.00px;transform-origin:0 50%;transform:scaleX(1.112);font-size:9.6px;line-height:11.04px;color:#1a1a1a;letter-spacing:0.5px">Signaling, Running and AFC Costs</div>
<div class="t s" style="top:436.28px;right:1191.70px;transform-origin:100% 50%;transform:scaleX(1.339);font-size:9.2px;line-height:10.58px;color:#4a4a4a">-</div>
<div class="t s" style="top:436.28px;right:1101.00px;transform-origin:100% 50%;transform:scaleX(1.339);font-size:9.2px;line-height:10.58px;color:#1a1a1a">(7.500)</div>
<div class="t s" style="top:436.28px;right:1010.64px;transform-origin:100% 50%;transform:scaleX(1.339);font-size:9.2px;line-height:10.58px;color:#1a1a1a">(7.500)</div>
<div class="t s" style="top:436.28px;right:920.28px;transform-origin:100% 50%;transform:scaleX(1.339);font-size:9.2px;line-height:10.58px;color:#1a1a1a">(9.000)</div>
<div class="t s" style="top:436.28px;right:829.92px;transform-origin:100% 50%;transform:scaleX(1.339);font-size:9.2px;line-height:10.58px;color:#1a1a1a">(10.500)</div>
<div class="t s" style="top:436.28px;right:739.56px;transform-origin:100% 50%;transform:scaleX(1.339);font-size:9.2px;line-height:10.58px;color:#1a1a1a">(15.000)</div>
<div class="t s" style="top:436.28px;right:649.20px;transform-origin:100% 50%;transform:scaleX(1.339);font-size:9.2px;line-height:10.58px;color:#1a1a1a">(12.000)</div>
<div class="t s" style="top:436.28px;right:558.84px;transform-origin:100% 50%;transform:scaleX(1.339);font-size:9.2px;line-height:10.58px;color:#1a1a1a">(12.000)</div>
<div class="t s" style="top:436.28px;right:468.48px;transform-origin:100% 50%;transform:scaleX(1.339);font-size:9.2px;line-height:10.58px;color:#1a1a1a">(9.000)</div>
<div class="t s" style="top:436.28px;right:378.12px;transform-origin:100% 50%;transform:scaleX(1.339);font-size:9.2px;line-height:10.58px;color:#1a1a1a">(12.000)</div>
<div class="t s" style="top:436.28px;right:287.76px;transform-origin:100% 50%;transform:scaleX(1.339);font-size:9.2px;line-height:10.58px;color:#1a1a1a">(10.500)</div>
<div class="t s" style="top:436.28px;right:197.40px;transform-origin:100% 50%;transform:scaleX(1.339);font-size:9.2px;line-height:10.58px;color:#1a1a1a">(22.500)</div>
<div class="t s" style="top:436.28px;right:107.04px;transform-origin:100% 50%;transform:scaleX(1.339);font-size:9.2px;line-height:10.58px;color:#1a1a1a">(22.500)</div>
<div class="t s" style="top:436.28px;right:17.00px;transform-origin:100% 50%;transform:scaleX(1.339);font-size:9.2px;line-height:10.58px;color:#1a1a1a">(150.000)</div>
<div class="t s" style="top:452.43px;left:42.00px;transform-origin:0 50%;transform:scaleX(1.116);font-size:9.6px;line-height:11.04px;color:#1a1a1a;letter-spacing:0.5px">Stabling Costs</div>
<div class="t s" style="top:452.80px;right:1191.70px;transform-origin:100% 50%;transform:scaleX(1.339);font-size:9.2px;line-height:10.58px;color:#4a4a4a">-</div>
<div class="t s" style="top:452.80px;right:1101.00px;transform-origin:100% 50%;transform:scaleX(1.339);font-size:9.2px;line-height:10.58px;color:#1a1a1a">(5.500)</div>
<div class="t s" style="top:452.80px;right:1010.64px;transform-origin:100% 50%;transform:scaleX(1.339);font-size:9.2px;line-height:10.58px;color:#1a1a1a">(5.500)</div>
<div class="t s" style="top:452.80px;right:920.28px;transform-origin:100% 50%;transform:scaleX(1.339);font-size:9.2px;line-height:10.58px;color:#1a1a1a">(6.600)</div>
<div class="t s" style="top:452.80px;right:829.92px;transform-origin:100% 50%;transform:scaleX(1.339);font-size:9.2px;line-height:10.58px;color:#1a1a1a">(7.700)</div>
<div class="t s" style="top:452.80px;right:739.56px;transform-origin:100% 50%;transform:scaleX(1.339);font-size:9.2px;line-height:10.58px;color:#1a1a1a">(11.000)</div>
<div class="t s" style="top:452.80px;right:649.20px;transform-origin:100% 50%;transform:scaleX(1.339);font-size:9.2px;line-height:10.58px;color:#1a1a1a">(8.800)</div>
<div class="t s" style="top:452.80px;right:558.84px;transform-origin:100% 50%;transform:scaleX(1.339);font-size:9.2px;line-height:10.58px;color:#1a1a1a">(8.800)</div>
<div class="t s" style="top:452.80px;right:468.48px;transform-origin:100% 50%;transform:scaleX(1.339);font-size:9.2px;line-height:10.58px;color:#1a1a1a">(6.600)</div>
<div class="t s" style="top:452.80px;right:378.12px;transform-origin:100% 50%;transform:scaleX(1.339);font-size:9.2px;line-height:10.58px;color:#1a1a1a">(8.800)</div>
<div class="t s" style="top:452.80px;right:287.76px;transform-origin:100% 50%;transform:scaleX(1.339);font-size:9.2px;line-height:10.58px;color:#1a1a1a">(7.700)</div>
<div class="t s" style="top:452.80px;right:197.40px;transform-origin:100% 50%;transform:scaleX(1.339);font-size:9.2px;line-height:10.58px;color:#1a1a1a">(16.500)</div>
<div class="t s" style="top:452.80px;right:107.04px;transform-origin:100% 50%;transform:scaleX(1.339);font-size:9.2px;line-height:10.58px;color:#1a1a1a">(16.500)</div>
<div class="t s" style="top:452.80px;right:17.00px;transform-origin:100% 50%;transform:scaleX(1.339);font-size:9.2px;line-height:10.58px;color:#1a1a1a">(110.000)</div>
<div class="t s" style="top:468.95px;left:42.00px;transform-origin:0 50%;transform:scaleX(1.186);font-size:9.6px;line-height:11.04px;color:#1a1a1a;letter-spacing:0.5px">Miscellaneous</div>
<div class="t s" style="top:469.32px;right:1191.70px;transform-origin:100% 50%;transform:scaleX(1.339);font-size:9.2px;line-height:10.58px;color:#4a4a4a">-</div>
<div class="t s" style="top:469.32px;right:1101.00px;transform-origin:100% 50%;transform:scaleX(1.339);font-size:9.2px;line-height:10.58px;color:#1a1a1a">(9.000)</div>
<div class="t s" style="top:469.32px;right:1010.64px;transform-origin:100% 50%;transform:scaleX(1.339);font-size:9.2px;line-height:10.58px;color:#1a1a1a">(9.000)</div>
<div class="t s" style="top:469.32px;right:920.28px;transform-origin:100% 50%;transform:scaleX(1.339);font-size:9.2px;line-height:10.58px;color:#1a1a1a">(10.800)</div>
<div class="t s" style="top:469.32px;right:829.92px;transform-origin:100% 50%;transform:scaleX(1.339);font-size:9.2px;line-height:10.58px;color:#1a1a1a">(12.600)</div>
<div class="t s" style="top:469.32px;right:739.56px;transform-origin:100% 50%;transform:scaleX(1.339);font-size:9.2px;line-height:10.58px;color:#1a1a1a">(18.000)</div>
<div class="t s" style="top:469.32px;right:649.20px;transform-origin:100% 50%;transform:scaleX(1.339);font-size:9.2px;line-height:10.58px;color:#1a1a1a">(14.400)</div>
<div class="t s" style="top:469.32px;right:558.84px;transform-origin:100% 50%;transform:scaleX(1.339);font-size:9.2px;line-height:10.58px;color:#1a1a1a">(14.400)</div>
<div class="t s" style="top:469.32px;right:468.48px;transform-origin:100% 50%;transform:scaleX(1.339);font-size:9.2px;line-height:10.58px;color:#1a1a1a">(10.800)</div>
<div class="t s" style="top:469.32px;right:378.12px;transform-origin:100% 50%;transform:scaleX(1.339);font-size:9.2px;line-height:10.58px;color:#1a1a1a">(14.400)</div>
<div class="t s" style="top:469.32px;right:287.76px;transform-origin:100% 50%;transform:scaleX(1.339);font-size:9.2px;line-height:10.58px;color:#1a1a1a">(12.600)</div>
<div class="t s" style="top:469.32px;right:197.40px;transform-origin:100% 50%;transform:scaleX(1.339);font-size:9.2px;line-height:10.58px;color:#1a1a1a">(27.000)</div>
<div class="t s" style="top:469.32px;right:107.04px;transform-origin:100% 50%;transform:scaleX(1.339);font-size:9.2px;line-height:10.58px;color:#1a1a1a">(27.000)</div>
<div class="t s" style="top:469.32px;right:17.00px;transform-origin:100% 50%;transform:scaleX(1.339);font-size:9.2px;line-height:10.58px;color:#1a1a1a">(180.000)</div>
<div class="t s" style="top:485.47px;left:42.00px;transform-origin:0 50%;transform:scaleX(1.169);font-size:9.6px;line-height:11.04px;color:#1a1a1a;letter-spacing:0.5px">Direct Payroll</div>
<div class="t s" style="top:485.84px;right:1191.70px;transform-origin:100% 50%;transform:scaleX(1.339);font-size:9.2px;line-height:10.58px;color:#4a4a4a">-</div>
<div class="t s" style="top:485.84px;right:1101.00px;transform-origin:100% 50%;transform:scaleX(1.339);font-size:9.2px;line-height:10.58px;color:#1a1a1a">(103.500)</div>
<div class="t s" style="top:485.84px;right:1010.64px;transform-origin:100% 50%;transform:scaleX(1.339);font-size:9.2px;line-height:10.58px;color:#1a1a1a">(103.500)</div>
<div class="t s" style="top:485.84px;right:920.28px;transform-origin:100% 50%;transform:scaleX(1.339);font-size:9.2px;line-height:10.58px;color:#1a1a1a">(103.500)</div>
<div class="t s" style="top:485.84px;right:829.92px;transform-origin:100% 50%;transform:scaleX(1.339);font-size:9.2px;line-height:10.58px;color:#1a1a1a">(103.500)</div>
<div class="t s" style="top:485.84px;right:739.56px;transform-origin:100% 50%;transform:scaleX(1.339);font-size:9.2px;line-height:10.58px;color:#1a1a1a">(103.500)</div>
<div class="t s" style="top:485.84px;right:649.20px;transform-origin:100% 50%;transform:scaleX(1.339);font-size:9.2px;line-height:10.58px;color:#1a1a1a">(103.500)</div>
<div class="t s" style="top:485.84px;right:558.84px;transform-origin:100% 50%;transform:scaleX(1.339);font-size:9.2px;line-height:10.58px;color:#1a1a1a">(103.500)</div>
<div class="t s" style="top:485.84px;right:468.48px;transform-origin:100% 50%;transform:scaleX(1.339);font-size:9.2px;line-height:10.58px;color:#1a1a1a">(103.500)</div>
<div class="t s" style="top:485.84px;right:378.12px;transform-origin:100% 50%;transform:scaleX(1.339);font-size:9.2px;line-height:10.58px;color:#1a1a1a">(103.500)</div>
<div class="t s" style="top:485.84px;right:287.76px;transform-origin:100% 50%;transform:scaleX(1.339);font-size:9.2px;line-height:10.58px;color:#1a1a1a">(103.500)</div>
<div class="t s" style="top:485.84px;right:197.40px;transform-origin:100% 50%;transform:scaleX(1.339);font-size:9.2px;line-height:10.58px;color:#1a1a1a">(103.500)</div>
<div class="t s" style="top:485.84px;right:107.04px;transform-origin:100% 50%;transform:scaleX(1.339);font-size:9.2px;line-height:10.58px;color:#1a1a1a">(103.500)</div>
<div class="t s" style="top:485.84px;right:17.00px;transform-origin:100% 50%;transform:scaleX(1.339);font-size:9.2px;line-height:10.58px;color:#1a1a1a">(1.242.000)</div>
<div class="t" style="top:501.99px;left:33.00px;transform-origin:0 50%;transform:scaleX(1.078);font-size:9.6px;line-height:11.04px;color:#1a1a1a;font-weight:bold;letter-spacing:0.5px">Total COGS</div>
<div class="t" style="top:502.36px;right:1191.70px;transform-origin:100% 50%;transform:scaleX(1.309);font-size:9.2px;line-height:10.58px;color:#1a1a1a;font-weight:bold">-</div>
<div class="t" style="top:502.36px;right:1101.00px;transform-origin:100% 50%;transform:scaleX(1.309);font-size:9.2px;line-height:10.58px;color:#1a1a1a;font-weight:bold">(224.000)</div>
<div class="t" style="top:502.36px;right:1010.64px;transform-origin:100% 50%;transform:scaleX(1.309);font-size:9.2px;line-height:10.58px;color:#1a1a1a;font-weight:bold">(224.000)</div>
<div class="t" style="top:502.36px;right:920.28px;transform-origin:100% 50%;transform:scaleX(1.309);font-size:9.2px;line-height:10.58px;color:#1a1a1a;font-weight:bold">(248.100)</div>
<div class="t" style="top:502.36px;right:829.92px;transform-origin:100% 50%;transform:scaleX(1.309);font-size:9.2px;line-height:10.58px;color:#1a1a1a;font-weight:bold">(272.200)</div>
<div class="t" style="top:502.36px;right:739.56px;transform-origin:100% 50%;transform:scaleX(1.309);font-size:9.2px;line-height:10.58px;color:#1a1a1a;font-weight:bold">(344.500)</div>
<div class="t" style="top:502.36px;right:649.20px;transform-origin:100% 50%;transform:scaleX(1.309);font-size:9.2px;line-height:10.58px;color:#1a1a1a;font-weight:bold">(296.300)</div>
<div class="t" style="top:502.36px;right:558.84px;transform-origin:100% 50%;transform:scaleX(1.309);font-size:9.2px;line-height:10.58px;color:#1a1a1a;font-weight:bold">(296.300)</div>
<div class="t" style="top:502.36px;right:468.48px;transform-origin:100% 50%;transform:scaleX(1.309);font-size:9.2px;line-height:10.58px;color:#1a1a1a;font-weight:bold">(248.100)</div>
<div class="t" style="top:502.36px;right:378.12px;transform-origin:100% 50%;transform:scaleX(1.309);font-size:9.2px;line-height:10.58px;color:#1a1a1a;font-weight:bold">(296.300)</div>
<div class="t" style="top:502.36px;right:287.76px;transform-origin:100% 50%;transform:scaleX(1.309);font-size:9.2px;line-height:10.58px;color:#1a1a1a;font-weight:bold">(272.200)</div>
<div class="t" style="top:502.36px;right:197.40px;transform-origin:100% 50%;transform:scaleX(1.309);font-size:9.2px;line-height:10.58px;color:#1a1a1a;font-weight:bold">(465.000)</div>
<div class="t" style="top:502.36px;right:107.04px;transform-origin:100% 50%;transform:scaleX(1.309);font-size:9.2px;line-height:10.58px;color:#1a1a1a;font-weight:bold">(465.000)</div>
<div class="t" style="top:502.36px;right:17.00px;transform-origin:100% 50%;transform:scaleX(1.309);font-size:9.2px;line-height:10.58px;color:#1a1a1a;font-weight:bold">(3.652.000)</div>
<div class="t" style="top:535.03px;left:33.00px;transform-origin:0 50%;transform:scaleX(1.073);font-size:9.6px;line-height:11.04px;color:#1a1a1a;font-weight:bold;letter-spacing:0.5px">Gross Profit</div>
<div class="t" style="top:535.40px;right:1191.70px;transform-origin:100% 50%;transform:scaleX(1.309);font-size:9.2px;line-height:10.58px;color:#1a1a1a;font-weight:bold">-</div>
<div class="t" style="top:535.40px;right:1101.00px;transform-origin:100% 50%;transform:scaleX(1.309);font-size:9.2px;line-height:10.58px;color:#1a1a1a;font-weight:bold">569.250</div>
<div class="t" style="top:535.40px;right:1010.64px;transform-origin:100% 50%;transform:scaleX(1.309);font-size:9.2px;line-height:10.58px;color:#1a1a1a;font-weight:bold">569.250</div>
<div class="t" style="top:535.40px;right:920.28px;transform-origin:100% 50%;transform:scaleX(1.309);font-size:9.2px;line-height:10.58px;color:#1a1a1a;font-weight:bold">703.800</div>
<div class="t" style="top:535.40px;right:829.92px;transform-origin:100% 50%;transform:scaleX(1.309);font-size:9.2px;line-height:10.58px;color:#1a1a1a;font-weight:bold">838.350</div>
<div class="t" style="top:535.40px;right:739.56px;transform-origin:100% 50%;transform:scaleX(1.309);font-size:9.2px;line-height:10.58px;color:#1a1a1a;font-weight:bold">1.242.000</div>
<div class="t" style="top:535.40px;right:649.20px;transform-origin:100% 50%;transform:scaleX(1.309);font-size:9.2px;line-height:10.58px;color:#1a1a1a;font-weight:bold">972.900</div>
<div class="t" style="top:535.40px;right:558.84px;transform-origin:100% 50%;transform:scaleX(1.309);font-size:9.2px;line-height:10.58px;color:#1a1a1a;font-weight:bold">972.900</div>
<div class="t" style="top:535.40px;right:468.48px;transform-origin:100% 50%;transform:scaleX(1.309);font-size:9.2px;line-height:10.58px;color:#1a1a1a;font-weight:bold">703.800</div>
<div class="t" style="top:535.40px;right:378.12px;transform-origin:100% 50%;transform:scaleX(1.309);font-size:9.2px;line-height:10.58px;color:#1a1a1a;font-weight:bold">972.900</div>
<div class="t" style="top:535.40px;right:287.76px;transform-origin:100% 50%;transform:scaleX(1.309);font-size:9.2px;line-height:10.58px;color:#1a1a1a;font-weight:bold">838.350</div>
<div class="t" style="top:535.40px;right:197.40px;transform-origin:100% 50%;transform:scaleX(1.309);font-size:9.2px;line-height:10.58px;color:#1a1a1a;font-weight:bold">1.914.750</div>
<div class="t" style="top:535.40px;right:107.04px;transform-origin:100% 50%;transform:scaleX(1.309);font-size:9.2px;line-height:10.58px;color:#1a1a1a;font-weight:bold">1.914.750</div>
<div class="t" style="top:535.40px;right:17.00px;transform-origin:100% 50%;transform:scaleX(1.309);font-size:9.2px;line-height:10.58px;color:#1a1a1a;font-weight:bold">12.213.000</div>
<div class="t" style="top:568.07px;left:33.00px;transform-origin:0 50%;transform:scaleX(1.089);font-size:9.6px;line-height:11.04px;color:#111;font-weight:bold;letter-spacing:0.5px">Operating Expenses</div>
<div class="t s" style="top:584.59px;left:42.00px;transform-origin:0 50%;transform:scaleX(1.131);font-size:9.6px;line-height:11.04px;color:#1a1a1a;letter-spacing:0.5px">Setup Expenses</div>
<div class="t s" style="top:584.96px;right:1191.70px;transform-origin:100% 50%;transform:scaleX(1.339);font-size:9.2px;line-height:10.58px;color:#1a1a1a">(310.000)</div>
<div class="t s" style="top:584.96px;right:1101.00px;transform-origin:100% 50%;transform:scaleX(1.339);font-size:9.2px;line-height:10.58px;color:#4a4a4a">-</div>
<div class="t s" style="top:584.96px;right:1010.64px;transform-origin:100% 50%;transform:scaleX(1.339);font-size:9.2px;line-height:10.58px;color:#4a4a4a">-</div>
<div class="t s" style="top:584.96px;right:920.28px;transform-origin:100% 50%;transform:scaleX(1.339);font-size:9.2px;line-height:10.58px;color:#4a4a4a">-</div>
<div class="t s" style="top:584.96px;right:829.92px;transform-origin:100% 50%;transform:scaleX(1.339);font-size:9.2px;line-height:10.58px;color:#4a4a4a">-</div>
<div class="t s" style="top:584.96px;right:739.56px;transform-origin:100% 50%;transform:scaleX(1.339);font-size:9.2px;line-height:10.58px;color:#4a4a4a">-</div>
<div class="t s" style="top:584.96px;right:649.20px;transform-origin:100% 50%;transform:scaleX(1.339);font-size:9.2px;line-height:10.58px;color:#4a4a4a">-</div>
<div class="t s" style="top:584.96px;right:558.84px;transform-origin:100% 50%;transform:scaleX(1.339);font-size:9.2px;line-height:10.58px;color:#4a4a4a">-</div>
<div class="t s" style="top:584.96px;right:468.48px;transform-origin:100% 50%;transform:scaleX(1.339);font-size:9.2px;line-height:10.58px;color:#4a4a4a">-</div>
<div class="t s" style="top:584.96px;right:378.12px;transform-origin:100% 50%;transform:scaleX(1.339);font-size:9.2px;line-height:10.58px;color:#4a4a4a">-</div>
<div class="t s" style="top:584.96px;right:287.76px;transform-origin:100% 50%;transform:scaleX(1.339);font-size:9.2px;line-height:10.58px;color:#4a4a4a">-</div>
<div class="t s" style="top:584.96px;right:197.40px;transform-origin:100% 50%;transform:scaleX(1.339);font-size:9.2px;line-height:10.58px;color:#4a4a4a">-</div>
<div class="t s" style="top:584.96px;right:107.04px;transform-origin:100% 50%;transform:scaleX(1.339);font-size:9.2px;line-height:10.58px;color:#4a4a4a">-</div>
<div class="t s" style="top:584.96px;right:17.00px;transform-origin:100% 50%;transform:scaleX(1.339);font-size:9.2px;line-height:10.58px;color:#4a4a4a">-</div>
<div class="t s" style="top:601.11px;left:42.00px;transform-origin:0 50%;transform:scaleX(1.184);font-size:9.6px;line-height:11.04px;color:#1a1a1a;letter-spacing:0.5px">Indirect Payroll</div>
<div class="t s" style="top:601.48px;right:1191.70px;transform-origin:100% 50%;transform:scaleX(1.339);font-size:9.2px;line-height:10.58px;color:#4a4a4a">-</div>
<div class="t s" style="top:601.48px;right:1101.00px;transform-origin:100% 50%;transform:scaleX(1.339);font-size:9.2px;line-height:10.58px;color:#1a1a1a">(57.500)</div>
<div class="t s" style="top:601.48px;right:1010.64px;transform-origin:100% 50%;transform:scaleX(1.339);font-size:9.2px;line-height:10.58px;color:#1a1a1a">(57.500)</div>
<div class="t s" style="top:601.48px;right:920.28px;transform-origin:100% 50%;transform:scaleX(1.339);font-size:9.2px;line-height:10.58px;color:#1a1a1a">(57.500)</div>
<div class="t s" style="top:601.48px;right:829.92px;transform-origin:100% 50%;transform:scaleX(1.339);font-size:9.2px;line-height:10.58px;color:#1a1a1a">(57.500)</div>
<div class="t s" style="top:601.48px;right:739.56px;transform-origin:100% 50%;transform:scaleX(1.339);font-size:9.2px;line-height:10.58px;color:#1a1a1a">(57.500)</div>
<div class="t s" style="top:601.48px;right:649.20px;transform-origin:100% 50%;transform:scaleX(1.339);font-size:9.2px;line-height:10.58px;color:#1a1a1a">(57.500)</div>
<div class="t s" style="top:601.48px;right:558.84px;transform-origin:100% 50%;transform:scaleX(1.339);font-size:9.2px;line-height:10.58px;color:#1a1a1a">(57.500)</div>
<div class="t s" style="top:601.48px;right:468.48px;transform-origin:100% 50%;transform:scaleX(1.339);font-size:9.2px;line-height:10.58px;color:#1a1a1a">(57.500)</div>
<div class="t s" style="top:601.48px;right:378.12px;transform-origin:100% 50%;transform:scaleX(1.339);font-size:9.2px;line-height:10.58px;color:#1a1a1a">(57.500)</div>
<div class="t s" style="top:601.48px;right:287.76px;transform-origin:100% 50%;transform:scaleX(1.339);font-size:9.2px;line-height:10.58px;color:#1a1a1a">(57.500)</div>
<div class="t s" style="top:601.48px;right:197.40px;transform-origin:100% 50%;transform:scaleX(1.339);font-size:9.2px;line-height:10.58px;color:#1a1a1a">(57.500)</div>
<div class="t s" style="top:601.48px;right:107.04px;transform-origin:100% 50%;transform:scaleX(1.339);font-size:9.2px;line-height:10.58px;color:#1a1a1a">(57.500)</div>
<div class="t s" style="top:601.48px;right:17.00px;transform-origin:100% 50%;transform:scaleX(1.339);font-size:9.2px;line-height:10.58px;color:#1a1a1a">(690.000)</div>
<div class="t s" style="top:617.63px;left:42.00px;transform-origin:0 50%;transform:scaleX(1.262);font-size:9.6px;line-height:11.04px;color:#1a1a1a;letter-spacing:0.5px">Marketing</div>
<div class="t s" style="top:618.00px;right:1191.70px;transform-origin:100% 50%;transform:scaleX(1.339);font-size:9.2px;line-height:10.58px;color:#4a4a4a">-</div>
<div class="t s" style="top:618.00px;right:1101.00px;transform-origin:100% 50%;transform:scaleX(1.339);font-size:9.2px;line-height:10.58px;color:#1a1a1a">(5.500)</div>
<div class="t s" style="top:618.00px;right:1010.64px;transform-origin:100% 50%;transform:scaleX(1.339);font-size:9.2px;line-height:10.58px;color:#1a1a1a">(5.500)</div>
<div class="t s" style="top:618.00px;right:920.28px;transform-origin:100% 50%;transform:scaleX(1.339);font-size:9.2px;line-height:10.58px;color:#1a1a1a">(6.600)</div>
<div class="t s" style="top:618.00px;right:829.92px;transform-origin:100% 50%;transform:scaleX(1.339);font-size:9.2px;line-height:10.58px;color:#1a1a1a">(7.700)</div>
<div class="t s" style="top:618.00px;right:739.56px;transform-origin:100% 50%;transform:scaleX(1.339);font-size:9.2px;line-height:10.58px;color:#1a1a1a">(11.000)</div>
<div class="t s" style="top:618.00px;right:649.20px;transform-origin:100% 50%;transform:scaleX(1.339);font-size:9.2px;line-height:10.58px;color:#1a1a1a">(8.800)</div>
<div class="t s" style="top:618.00px;right:558.84px;transform-origin:100% 50%;transform:scaleX(1.339);font-size:9.2px;line-height:10.58px;color:#1a1a1a">(8.800)</div>
<div class="t s" style="top:618.00px;right:468.48px;transform-origin:100% 50%;transform:scaleX(1.339);font-size:9.2px;line-height:10.58px;color:#1a1a1a">(6.600)</div>
<div class="t s" style="top:618.00px;right:378.12px;transform-origin:100% 50%;transform:scaleX(1.339);font-size:9.2px;line-height:10.58px;color:#1a1a1a">(8.800)</div>
<div class="t s" style="top:618.00px;right:287.76px;transform-origin:100% 50%;transform:scaleX(1.339);font-size:9.2px;line-height:10.58px;color:#1a1a1a">(7.700)</div>
<div class="t s" style="top:618.00px;right:197.40px;transform-origin:100% 50%;transform:scaleX(1.339);font-size:9.2px;line-height:10.58px;color:#1a1a1a">(16.500)</div>
<div class="t s" style="top:618.00px;right:107.04px;transform-origin:100% 50%;transform:scaleX(1.339);font-size:9.2px;line-height:10.58px;color:#1a1a1a">(16.500)</div>
<div class="t s" style="top:618.00px;right:17.00px;transform-origin:100% 50%;transform:scaleX(1.339);font-size:9.2px;line-height:10.58px;color:#1a1a1a">(110.000)</div>
<div class="t s" style="top:634.15px;left:42.00px;transform-origin:0 50%;transform:scaleX(1.165);font-size:9.6px;line-height:11.04px;color:#1a1a1a;letter-spacing:0.5px">Rent & Utilities</div>
<div class="t s" style="top:634.52px;right:1191.70px;transform-origin:100% 50%;transform:scaleX(1.339);font-size:9.2px;line-height:10.58px;color:#4a4a4a">-</div>
<div class="t s" style="top:634.52px;right:1101.00px;transform-origin:100% 50%;transform:scaleX(1.339);font-size:9.2px;line-height:10.58px;color:#1a1a1a">(6.250)</div>
<div class="t s" style="top:634.52px;right:1010.64px;transform-origin:100% 50%;transform:scaleX(1.339);font-size:9.2px;line-height:10.58px;color:#1a1a1a">(6.250)</div>
<div class="t s" style="top:634.52px;right:920.28px;transform-origin:100% 50%;transform:scaleX(1.339);font-size:9.2px;line-height:10.58px;color:#1a1a1a">(6.250)</div>
<div class="t s" style="top:634.52px;right:829.92px;transform-origin:100% 50%;transform:scaleX(1.339);font-size:9.2px;line-height:10.58px;color:#1a1a1a">(6.250)</div>
<div class="t s" style="top:634.52px;right:739.56px;transform-origin:100% 50%;transform:scaleX(1.339);font-size:9.2px;line-height:10.58px;color:#1a1a1a">(6.250)</div>
<div class="t s" style="top:634.52px;right:649.20px;transform-origin:100% 50%;transform:scaleX(1.339);font-size:9.2px;line-height:10.58px;color:#1a1a1a">(6.250)</div>
<div class="t s" style="top:634.52px;right:558.84px;transform-origin:100% 50%;transform:scaleX(1.339);font-size:9.2px;line-height:10.58px;color:#1a1a1a">(6.250)</div>
<div class="t s" style="top:634.52px;right:468.48px;transform-origin:100% 50%;transform:scaleX(1.339);font-size:9.2px;line-height:10.58px;color:#1a1a1a">(6.250)</div>
<div class="t s" style="top:634.52px;right:378.12px;transform-origin:100% 50%;transform:scaleX(1.339);font-size:9.2px;line-height:10.58px;color:#1a1a1a">(6.250)</div>
<div class="t s" style="top:634.52px;right:287.76px;transform-origin:100% 50%;transform:scaleX(1.339);font-size:9.2px;line-height:10.58px;color:#1a1a1a">(6.250)</div>
<div class="t s" style="top:634.52px;right:197.40px;transform-origin:100% 50%;transform:scaleX(1.339);font-size:9.2px;line-height:10.58px;color:#1a1a1a">(6.250)</div>
<div class="t s" style="top:634.52px;right:107.04px;transform-origin:100% 50%;transform:scaleX(1.339);font-size:9.2px;line-height:10.58px;color:#1a1a1a">(6.250)</div>
<div class="t s" style="top:634.52px;right:17.00px;transform-origin:100% 50%;transform:scaleX(1.339);font-size:9.2px;line-height:10.58px;color:#1a1a1a">(75.000)</div>
<div class="t s" style="top:650.67px;left:42.00px;transform-origin:0 50%;transform:scaleX(1.250);font-size:9.6px;line-height:11.04px;color:#1a1a1a;letter-spacing:0.5px">I.T.</div>
<div class="t s" style="top:651.04px;right:1191.70px;transform-origin:100% 50%;transform:scaleX(1.339);font-size:9.2px;line-height:10.58px;color:#4a4a4a">-</div>
<div class="t s" style="top:651.04px;right:1101.00px;transform-origin:100% 50%;transform:scaleX(1.339);font-size:9.2px;line-height:10.58px;color:#1a1a1a">(1.667)</div>
<div class="t s" style="top:651.04px;right:1010.64px;transform-origin:100% 50%;transform:scaleX(1.339);font-size:9.2px;line-height:10.58px;color:#1a1a1a">(1.667)</div>
<div class="t s" style="top:651.04px;right:920.28px;transform-origin:100% 50%;transform:scaleX(1.339);font-size:9.2px;line-height:10.58px;color:#1a1a1a">(1.667)</div>
<div class="t s" style="top:651.04px;right:829.92px;transform-origin:100% 50%;transform:scaleX(1.339);font-size:9.2px;line-height:10.58px;color:#1a1a1a">(1.667)</div>
<div class="t s" style="top:651.04px;right:739.56px;transform-origin:100% 50%;transform:scaleX(1.339);font-size:9.2px;line-height:10.58px;color:#1a1a1a">(1.667)</div>
<div class="t s" style="top:651.04px;right:649.20px;transform-origin:100% 50%;transform:scaleX(1.339);font-size:9.2px;line-height:10.58px;color:#1a1a1a">(1.667)</div>
<div class="t s" style="top:651.04px;right:558.84px;transform-origin:100% 50%;transform:scaleX(1.339);font-size:9.2px;line-height:10.58px;color:#1a1a1a">(1.667)</div>
<div class="t s" style="top:651.04px;right:468.48px;transform-origin:100% 50%;transform:scaleX(1.339);font-size:9.2px;line-height:10.58px;color:#1a1a1a">(1.667)</div>
<div class="t s" style="top:651.04px;right:378.12px;transform-origin:100% 50%;transform:scaleX(1.339);font-size:9.2px;line-height:10.58px;color:#1a1a1a">(1.667)</div>
<div class="t s" style="top:651.04px;right:287.76px;transform-origin:100% 50%;transform:scaleX(1.339);font-size:9.2px;line-height:10.58px;color:#1a1a1a">(1.667)</div>
<div class="t s" style="top:651.04px;right:197.40px;transform-origin:100% 50%;transform:scaleX(1.339);font-size:9.2px;line-height:10.58px;color:#1a1a1a">(1.667)</div>
<div class="t s" style="top:651.04px;right:107.04px;transform-origin:100% 50%;transform:scaleX(1.339);font-size:9.2px;line-height:10.58px;color:#1a1a1a">(1.667)</div>
<div class="t s" style="top:651.04px;right:17.00px;transform-origin:100% 50%;transform:scaleX(1.339);font-size:9.2px;line-height:10.58px;color:#1a1a1a">(20.000)</div>
<div class="t s" style="top:667.19px;left:42.00px;transform-origin:0 50%;transform:scaleX(1.184);font-size:9.6px;line-height:11.04px;color:#1a1a1a;letter-spacing:0.5px">Repairs & Maintenance</div>
<div class="t s" style="top:667.56px;right:1191.70px;transform-origin:100% 50%;transform:scaleX(1.339);font-size:9.2px;line-height:10.58px;color:#4a4a4a">-</div>
<div class="t s" style="top:667.56px;right:1101.00px;transform-origin:100% 50%;transform:scaleX(1.339);font-size:9.2px;line-height:10.58px;color:#1a1a1a">(2.500)</div>
<div class="t s" style="top:667.56px;right:1010.64px;transform-origin:100% 50%;transform:scaleX(1.339);font-size:9.2px;line-height:10.58px;color:#1a1a1a">(2.500)</div>
<div class="t s" style="top:667.56px;right:920.28px;transform-origin:100% 50%;transform:scaleX(1.339);font-size:9.2px;line-height:10.58px;color:#1a1a1a">(2.500)</div>
<div class="t s" style="top:667.56px;right:829.92px;transform-origin:100% 50%;transform:scaleX(1.339);font-size:9.2px;line-height:10.58px;color:#1a1a1a">(2.500)</div>
<div class="t s" style="top:667.56px;right:739.56px;transform-origin:100% 50%;transform:scaleX(1.339);font-size:9.2px;line-height:10.58px;color:#1a1a1a">(2.500)</div>
<div class="t s" style="top:667.56px;right:649.20px;transform-origin:100% 50%;transform:scaleX(1.339);font-size:9.2px;line-height:10.58px;color:#1a1a1a">(2.500)</div>
<div class="t s" style="top:667.56px;right:558.84px;transform-origin:100% 50%;transform:scaleX(1.339);font-size:9.2px;line-height:10.58px;color:#1a1a1a">(2.500)</div>
<div class="t s" style="top:667.56px;right:468.48px;transform-origin:100% 50%;transform:scaleX(1.339);font-size:9.2px;line-height:10.58px;color:#1a1a1a">(2.500)</div>
<div class="t s" style="top:667.56px;right:378.12px;transform-origin:100% 50%;transform:scaleX(1.339);font-size:9.2px;line-height:10.58px;color:#1a1a1a">(2.500)</div>
<div class="t s" style="top:667.56px;right:287.76px;transform-origin:100% 50%;transform:scaleX(1.339);font-size:9.2px;line-height:10.58px;color:#1a1a1a">(2.500)</div>
<div class="t s" style="top:667.56px;right:197.40px;transform-origin:100% 50%;transform:scaleX(1.339);font-size:9.2px;line-height:10.58px;color:#1a1a1a">(2.500)</div>
<div class="t s" style="top:667.56px;right:107.04px;transform-origin:100% 50%;transform:scaleX(1.339);font-size:9.2px;line-height:10.58px;color:#1a1a1a">(2.500)</div>
<div class="t s" style="top:667.56px;right:17.00px;transform-origin:100% 50%;transform:scaleX(1.339);font-size:9.2px;line-height:10.58px;color:#1a1a1a">(30.000)</div>
<div class="t s" style="top:683.71px;left:42.00px;transform-origin:0 50%;transform:scaleX(1.208);font-size:9.6px;line-height:11.04px;color:#1a1a1a;letter-spacing:0.5px">Insurance</div>
<div class="t s" style="top:684.08px;right:1191.70px;transform-origin:100% 50%;transform:scaleX(1.339);font-size:9.2px;line-height:10.58px;color:#4a4a4a">-</div>
<div class="t s" style="top:684.08px;right:1101.00px;transform-origin:100% 50%;transform:scaleX(1.339);font-size:9.2px;line-height:10.58px;color:#1a1a1a">(10.417)</div>
<div class="t s" style="top:684.08px;right:1010.64px;transform-origin:100% 50%;transform:scaleX(1.339);font-size:9.2px;line-height:10.58px;color:#1a1a1a">(10.417)</div>
<div class="t s" style="top:684.08px;right:920.28px;transform-origin:100% 50%;transform:scaleX(1.339);font-size:9.2px;line-height:10.58px;color:#1a1a1a">(10.417)</div>
<div class="t s" style="top:684.08px;right:829.92px;transform-origin:100% 50%;transform:scaleX(1.339);font-size:9.2px;line-height:10.58px;color:#1a1a1a">(10.417)</div>
<div class="t s" style="top:684.08px;right:739.56px;transform-origin:100% 50%;transform:scaleX(1.339);font-size:9.2px;line-height:10.58px;color:#1a1a1a">(10.417)</div>
<div class="t s" style="top:684.08px;right:649.20px;transform-origin:100% 50%;transform:scaleX(1.339);font-size:9.2px;line-height:10.58px;color:#1a1a1a">(10.417)</div>
<div class="t s" style="top:684.08px;right:558.84px;transform-origin:100% 50%;transform:scaleX(1.339);font-size:9.2px;line-height:10.58px;color:#1a1a1a">(10.417)</div>
<div class="t s" style="top:684.08px;right:468.48px;transform-origin:100% 50%;transform:scaleX(1.339);font-size:9.2px;line-height:10.58px;color:#1a1a1a">(10.417)</div>
<div class="t s" style="top:684.08px;right:378.12px;transform-origin:100% 50%;transform:scaleX(1.339);font-size:9.2px;line-height:10.58px;color:#1a1a1a">(10.417)</div>
<div class="t s" style="top:684.08px;right:287.76px;transform-origin:100% 50%;transform:scaleX(1.339);font-size:9.2px;line-height:10.58px;color:#1a1a1a">(10.417)</div>
<div class="t s" style="top:684.08px;right:197.40px;transform-origin:100% 50%;transform:scaleX(1.339);font-size:9.2px;line-height:10.58px;color:#1a1a1a">(10.417)</div>
<div class="t s" style="top:684.08px;right:107.04px;transform-origin:100% 50%;transform:scaleX(1.339);font-size:9.2px;line-height:10.58px;color:#1a1a1a">(10.417)</div>
<div class="t s" style="top:684.08px;right:17.00px;transform-origin:100% 50%;transform:scaleX(1.339);font-size:9.2px;line-height:10.58px;color:#1a1a1a">(125.000)</div>
<div class="t s" style="top:700.23px;left:42.00px;transform-origin:0 50%;transform:scaleX(1.182);font-size:9.6px;line-height:11.04px;color:#1a1a1a;letter-spacing:0.5px">Miscellaneous</div>
<div class="t s" style="top:700.60px;right:1191.70px;transform-origin:100% 50%;transform:scaleX(1.339);font-size:9.2px;line-height:10.58px;color:#4a4a4a">-</div>
<div class="t s" style="top:700.60px;right:1101.00px;transform-origin:100% 50%;transform:scaleX(1.339);font-size:9.2px;line-height:10.58px;color:#1a1a1a">(7.917)</div>
<div class="t s" style="top:700.60px;right:1010.64px;transform-origin:100% 50%;transform:scaleX(1.339);font-size:9.2px;line-height:10.58px;color:#1a1a1a">(7.917)</div>
<div class="t s" style="top:700.60px;right:920.28px;transform-origin:100% 50%;transform:scaleX(1.339);font-size:9.2px;line-height:10.58px;color:#1a1a1a">(7.917)</div>
<div class="t s" style="top:700.60px;right:829.92px;transform-origin:100% 50%;transform:scaleX(1.339);font-size:9.2px;line-height:10.58px;color:#1a1a1a">(7.917)</div>
<div class="t s" style="top:700.60px;right:739.56px;transform-origin:100% 50%;transform:scaleX(1.339);font-size:9.2px;line-height:10.58px;color:#1a1a1a">(7.917)</div>
<div class="t s" style="top:700.60px;right:649.20px;transform-origin:100% 50%;transform:scaleX(1.339);font-size:9.2px;line-height:10.58px;color:#1a1a1a">(7.917)</div>
<div class="t s" style="top:700.60px;right:558.84px;transform-origin:100% 50%;transform:scaleX(1.339);font-size:9.2px;line-height:10.58px;color:#1a1a1a">(7.917)</div>
<div class="t s" style="top:700.60px;right:468.48px;transform-origin:100% 50%;transform:scaleX(1.339);font-size:9.2px;line-height:10.58px;color:#1a1a1a">(7.917)</div>
<div class="t s" style="top:700.60px;right:378.12px;transform-origin:100% 50%;transform:scaleX(1.339);font-size:9.2px;line-height:10.58px;color:#1a1a1a">(7.917)</div>
<div class="t s" style="top:700.60px;right:287.76px;transform-origin:100% 50%;transform:scaleX(1.339);font-size:9.2px;line-height:10.58px;color:#1a1a1a">(7.917)</div>
<div class="t s" style="top:700.60px;right:197.40px;transform-origin:100% 50%;transform:scaleX(1.339);font-size:9.2px;line-height:10.58px;color:#1a1a1a">(7.917)</div>
<div class="t s" style="top:700.60px;right:107.04px;transform-origin:100% 50%;transform:scaleX(1.339);font-size:9.2px;line-height:10.58px;color:#1a1a1a">(7.917)</div>
<div class="t s" style="top:700.60px;right:17.00px;transform-origin:100% 50%;transform:scaleX(1.339);font-size:9.2px;line-height:10.58px;color:#1a1a1a">(95.000)</div>
<div class="t s" style="top:716.75px;left:42.00px;transform-origin:0 50%;transform:scaleX(1.125);font-size:9.6px;line-height:11.04px;color:#1a1a1a;letter-spacing:0.5px">Payments & Processing Fees</div>
<div class="t s" style="top:717.12px;right:1191.70px;transform-origin:100% 50%;transform:scaleX(1.339);font-size:9.2px;line-height:10.58px;color:#4a4a4a">-</div>
<div class="t s" style="top:717.12px;right:1101.00px;transform-origin:100% 50%;transform:scaleX(1.339);font-size:9.2px;line-height:10.58px;color:#1a1a1a">(25.120)</div>
<div class="t s" style="top:717.12px;right:1010.64px;transform-origin:100% 50%;transform:scaleX(1.339);font-size:9.2px;line-height:10.58px;color:#1a1a1a">(25.120)</div>
<div class="t s" style="top:717.12px;right:920.28px;transform-origin:100% 50%;transform:scaleX(1.339);font-size:9.2px;line-height:10.58px;color:#1a1a1a">(25.120)</div>
<div class="t s" style="top:717.12px;right:829.92px;transform-origin:100% 50%;transform:scaleX(1.339);font-size:9.2px;line-height:10.58px;color:#1a1a1a">(25.120)</div>
<div class="t s" style="top:717.12px;right:739.56px;transform-origin:100% 50%;transform:scaleX(1.339);font-size:9.2px;line-height:10.58px;color:#1a1a1a">(25.120)</div>
<div class="t s" style="top:717.12px;right:649.20px;transform-origin:100% 50%;transform:scaleX(1.339);font-size:9.2px;line-height:10.58px;color:#1a1a1a">(25.120)</div>
<div class="t s" style="top:717.12px;right:558.84px;transform-origin:100% 50%;transform:scaleX(1.339);font-size:9.2px;line-height:10.58px;color:#1a1a1a">(25.120)</div>
<div class="t s" style="top:717.12px;right:468.48px;transform-origin:100% 50%;transform:scaleX(1.339);font-size:9.2px;line-height:10.58px;color:#1a1a1a">(25.120)</div>
<div class="t s" style="top:717.12px;right:378.12px;transform-origin:100% 50%;transform:scaleX(1.339);font-size:9.2px;line-height:10.58px;color:#1a1a1a">(25.120)</div>
<div class="t s" style="top:717.12px;right:287.76px;transform-origin:100% 50%;transform:scaleX(1.339);font-size:9.2px;line-height:10.58px;color:#1a1a1a">(25.120)</div>
<div class="t s" style="top:717.12px;right:197.40px;transform-origin:100% 50%;transform:scaleX(1.339);font-size:9.2px;line-height:10.58px;color:#1a1a1a">(25.120)</div>
<div class="t s" style="top:717.12px;right:107.04px;transform-origin:100% 50%;transform:scaleX(1.339);font-size:9.2px;line-height:10.58px;color:#1a1a1a">(25.120)</div>
<div class="t s" style="top:717.12px;right:17.00px;transform-origin:100% 50%;transform:scaleX(1.339);font-size:9.2px;line-height:10.58px;color:#1a1a1a">(301.435)</div>
<div class="t" style="top:733.27px;left:33.00px;transform-origin:0 50%;transform:scaleX(1.099);font-size:9.6px;line-height:11.04px;color:#1a1a1a;font-weight:bold;letter-spacing:0.5px">Total Operating Expenses</div>
<div class="t" style="top:733.64px;right:1191.70px;transform-origin:100% 50%;transform:scaleX(1.309);font-size:9.2px;line-height:10.58px;color:#1a1a1a;font-weight:bold">(310.000)</div>
<div class="t" style="top:733.64px;right:1101.00px;transform-origin:100% 50%;transform:scaleX(1.309);font-size:9.2px;line-height:10.58px;color:#1a1a1a;font-weight:bold">(116.870)</div>
<div class="t" style="top:733.64px;right:1010.64px;transform-origin:100% 50%;transform:scaleX(1.309);font-size:9.2px;line-height:10.58px;color:#1a1a1a;font-weight:bold">(116.870)</div>
<div class="t" style="top:733.64px;right:920.28px;transform-origin:100% 50%;transform:scaleX(1.309);font-size:9.2px;line-height:10.58px;color:#1a1a1a;font-weight:bold">(117.970)</div>
<div class="t" style="top:733.64px;right:829.92px;transform-origin:100% 50%;transform:scaleX(1.309);font-size:9.2px;line-height:10.58px;color:#1a1a1a;font-weight:bold">(119.070)</div>
<div class="t" style="top:733.64px;right:739.56px;transform-origin:100% 50%;transform:scaleX(1.309);font-size:9.2px;line-height:10.58px;color:#1a1a1a;font-weight:bold">(122.370)</div>
<div class="t" style="top:733.64px;right:649.20px;transform-origin:100% 50%;transform:scaleX(1.309);font-size:9.2px;line-height:10.58px;color:#1a1a1a;font-weight:bold">(120.170)</div>
<div class="t" style="top:733.64px;right:558.84px;transform-origin:100% 50%;transform:scaleX(1.309);font-size:9.2px;line-height:10.58px;color:#1a1a1a;font-weight:bold">(120.170)</div>
<div class="t" style="top:733.64px;right:468.48px;transform-origin:100% 50%;transform:scaleX(1.309);font-size:9.2px;line-height:10.58px;color:#1a1a1a;font-weight:bold">(117.970)</div>
<div class="t" style="top:733.64px;right:378.12px;transform-origin:100% 50%;transform:scaleX(1.309);font-size:9.2px;line-height:10.58px;color:#1a1a1a;font-weight:bold">(120.170)</div>
<div class="t" style="top:733.64px;right:287.76px;transform-origin:100% 50%;transform:scaleX(1.309);font-size:9.2px;line-height:10.58px;color:#1a1a1a;font-weight:bold">(119.070)</div>
<div class="t" style="top:733.64px;right:197.40px;transform-origin:100% 50%;transform:scaleX(1.309);font-size:9.2px;line-height:10.58px;color:#1a1a1a;font-weight:bold">(127.870)</div>
<div class="t" style="top:733.64px;right:107.04px;transform-origin:100% 50%;transform:scaleX(1.309);font-size:9.2px;line-height:10.58px;color:#1a1a1a;font-weight:bold">(127.870)</div>
<div class="t" style="top:733.64px;right:17.00px;transform-origin:100% 50%;transform:scaleX(1.309);font-size:9.2px;line-height:10.58px;color:#1a1a1a;font-weight:bold">(1.446.435)</div>
<div class="t" style="top:766.31px;left:33.00px;transform-origin:0 50%;transform:scaleX(1.132);font-size:9.6px;line-height:11.04px;color:#1a1a1a;font-weight:bold;letter-spacing:0.5px">Net Operating Income</div>
<div class="t" style="top:766.68px;right:1191.70px;transform-origin:100% 50%;transform:scaleX(1.309);font-size:9.2px;line-height:10.58px;color:#1a1a1a;font-weight:bold">(310.000)</div>
<div class="t" style="top:766.68px;right:1101.00px;transform-origin:100% 50%;transform:scaleX(1.309);font-size:9.2px;line-height:10.58px;color:#1a1a1a;font-weight:bold">452.380</div>
<div class="t" style="top:766.68px;right:1010.64px;transform-origin:100% 50%;transform:scaleX(1.309);font-size:9.2px;line-height:10.58px;color:#1a1a1a;font-weight:bold">452.380</div>
<div class="t" style="top:766.68px;right:920.28px;transform-origin:100% 50%;transform:scaleX(1.309);font-size:9.2px;line-height:10.58px;color:#1a1a1a;font-weight:bold">585.830</div>
<div class="t" style="top:766.68px;right:829.92px;transform-origin:100% 50%;transform:scaleX(1.309);font-size:9.2px;line-height:10.58px;color:#1a1a1a;font-weight:bold">719.280</div>
<div class="t" style="top:766.68px;right:739.56px;transform-origin:100% 50%;transform:scaleX(1.309);font-size:9.2px;line-height:10.58px;color:#1a1a1a;font-weight:bold">1.119.630</div>
<div class="t" style="top:766.68px;right:649.20px;transform-origin:100% 50%;transform:scaleX(1.309);font-size:9.2px;line-height:10.58px;color:#1a1a1a;font-weight:bold">852.730</div>
<div class="t" style="top:766.68px;right:558.84px;transform-origin:100% 50%;transform:scaleX(1.309);font-size:9.2px;line-height:10.58px;color:#1a1a1a;font-weight:bold">852.730</div>
<div class="t" style="top:766.68px;right:468.48px;transform-origin:100% 50%;transform:scaleX(1.309);font-size:9.2px;line-height:10.58px;color:#1a1a1a;font-weight:bold">585.830</div>
<div class="t" style="top:766.68px;right:378.12px;transform-origin:100% 50%;transform:scaleX(1.309);font-size:9.2px;line-height:10.58px;color:#1a1a1a;font-weight:bold">852.730</div>
<div class="t" style="top:766.68px;right:287.76px;transform-origin:100% 50%;transform:scaleX(1.309);font-size:9.2px;line-height:10.58px;color:#1a1a1a;font-weight:bold">719.280</div>
<div class="t" style="top:766.68px;right:197.40px;transform-origin:100% 50%;transform:scaleX(1.309);font-size:9.2px;line-height:10.58px;color:#1a1a1a;font-weight:bold">1.786.880</div>
<div class="t" style="top:766.68px;right:107.04px;transform-origin:100% 50%;transform:scaleX(1.309);font-size:9.2px;line-height:10.58px;color:#1a1a1a;font-weight:bold">1.786.880</div>
<div class="t" style="top:766.68px;right:17.00px;transform-origin:100% 50%;transform:scaleX(1.309);font-size:9.2px;line-height:10.58px;color:#1a1a1a;font-weight:bold">10.766.565</div>
<div class="t" style="top:799.35px;left:33.00px;transform-origin:0 50%;transform:scaleX(1.097);font-size:9.6px;line-height:11.04px;color:#111;font-weight:bold;letter-spacing:0.5px">Capital Expenditures</div>
<div class="t s" style="top:815.87px;left:42.00px;transform-origin:0 50%;transform:scaleX(1.202);font-size:9.6px;line-height:11.04px;color:#1a1a1a;letter-spacing:0.5px">Land</div>
<div class="t s" style="top:816.24px;right:1191.70px;transform-origin:100% 50%;transform:scaleX(1.339);font-size:9.2px;line-height:10.58px;color:#1a1a1a">(9.040.000)</div>
<div class="t s" style="top:816.24px;right:1101.00px;transform-origin:100% 50%;transform:scaleX(1.339);font-size:9.2px;line-height:10.58px;color:#4a4a4a">-</div>
<div class="t s" style="top:816.24px;right:1010.64px;transform-origin:100% 50%;transform:scaleX(1.339);font-size:9.2px;line-height:10.58px;color:#4a4a4a">-</div>
<div class="t s" style="top:816.24px;right:920.28px;transform-origin:100% 50%;transform:scaleX(1.339);font-size:9.2px;line-height:10.58px;color:#4a4a4a">-</div>
<div class="t s" style="top:816.24px;right:829.92px;transform-origin:100% 50%;transform:scaleX(1.339);font-size:9.2px;line-height:10.58px;color:#4a4a4a">-</div>
<div class="t s" style="top:816.24px;right:739.56px;transform-origin:100% 50%;transform:scaleX(1.339);font-size:9.2px;line-height:10.58px;color:#4a4a4a">-</div>
<div class="t s" style="top:816.24px;right:649.20px;transform-origin:100% 50%;transform:scaleX(1.339);font-size:9.2px;line-height:10.58px;color:#4a4a4a">-</div>
<div class="t s" style="top:816.24px;right:558.84px;transform-origin:100% 50%;transform:scaleX(1.339);font-size:9.2px;line-height:10.58px;color:#4a4a4a">-</div>
<div class="t s" style="top:816.24px;right:468.48px;transform-origin:100% 50%;transform:scaleX(1.339);font-size:9.2px;line-height:10.58px;color:#4a4a4a">-</div>
<div class="t s" style="top:816.24px;right:378.12px;transform-origin:100% 50%;transform:scaleX(1.339);font-size:9.2px;line-height:10.58px;color:#4a4a4a">-</div>
<div class="t s" style="top:816.24px;right:287.76px;transform-origin:100% 50%;transform:scaleX(1.339);font-size:9.2px;line-height:10.58px;color:#4a4a4a">-</div>
<div class="t s" style="top:816.24px;right:197.40px;transform-origin:100% 50%;transform:scaleX(1.339);font-size:9.2px;line-height:10.58px;color:#4a4a4a">-</div>
<div class="t s" style="top:816.24px;right:107.04px;transform-origin:100% 50%;transform:scaleX(1.339);font-size:9.2px;line-height:10.58px;color:#4a4a4a">-</div>
<div class="t s" style="top:816.24px;right:17.00px;transform-origin:100% 50%;transform:scaleX(1.339);font-size:9.2px;line-height:10.58px;color:#4a4a4a">-</div>
<div class="t s" style="top:832.39px;left:42.00px;transform-origin:0 50%;transform:scaleX(1.158);font-size:9.6px;line-height:11.04px;color:#1a1a1a;letter-spacing:0.5px">Station Construction Costs</div>
<div class="t s" style="top:832.76px;right:1191.70px;transform-origin:100% 50%;transform:scaleX(1.339);font-size:9.2px;line-height:10.58px;color:#1a1a1a">(18.000.000)</div>
<div class="t s" style="top:832.76px;right:1101.00px;transform-origin:100% 50%;transform:scaleX(1.339);font-size:9.2px;line-height:10.58px;color:#4a4a4a">-</div>
<div class="t s" style="top:832.76px;right:1010.64px;transform-origin:100% 50%;transform:scaleX(1.339);font-size:9.2px;line-height:10.58px;color:#4a4a4a">-</div>
<div class="t s" style="top:832.76px;right:920.28px;transform-origin:100% 50%;transform:scaleX(1.339);font-size:9.2px;line-height:10.58px;color:#4a4a4a">-</div>
<div class="t s" style="top:832.76px;right:829.92px;transform-origin:100% 50%;transform:scaleX(1.339);font-size:9.2px;line-height:10.58px;color:#4a4a4a">-</div>
<div class="t s" style="top:832.76px;right:739.56px;transform-origin:100% 50%;transform:scaleX(1.339);font-size:9.2px;line-height:10.58px;color:#4a4a4a">-</div>
<div class="t s" style="top:832.76px;right:649.20px;transform-origin:100% 50%;transform:scaleX(1.339);font-size:9.2px;line-height:10.58px;color:#4a4a4a">-</div>
<div class="t s" style="top:832.76px;right:558.84px;transform-origin:100% 50%;transform:scaleX(1.339);font-size:9.2px;line-height:10.58px;color:#4a4a4a">-</div>
<div class="t s" style="top:832.76px;right:468.48px;transform-origin:100% 50%;transform:scaleX(1.339);font-size:9.2px;line-height:10.58px;color:#4a4a4a">-</div>
<div class="t s" style="top:832.76px;right:378.12px;transform-origin:100% 50%;transform:scaleX(1.339);font-size:9.2px;line-height:10.58px;color:#4a4a4a">-</div>
<div class="t s" style="top:832.76px;right:287.76px;transform-origin:100% 50%;transform:scaleX(1.339);font-size:9.2px;line-height:10.58px;color:#4a4a4a">-</div>
<div class="t s" style="top:832.76px;right:197.40px;transform-origin:100% 50%;transform:scaleX(1.339);font-size:9.2px;line-height:10.58px;color:#4a4a4a">-</div>
<div class="t s" style="top:832.76px;right:107.04px;transform-origin:100% 50%;transform:scaleX(1.339);font-size:9.2px;line-height:10.58px;color:#4a4a4a">-</div>
<div class="t s" style="top:832.76px;right:17.00px;transform-origin:100% 50%;transform:scaleX(1.339);font-size:9.2px;line-height:10.58px;color:#4a4a4a">-</div>
<div class="t s" style="top:848.91px;left:42.00px;transform-origin:0 50%;transform:scaleX(1.166);font-size:9.6px;line-height:11.04px;color:#1a1a1a;letter-spacing:0.5px">Mechanical and Electrical Components</div>
<div class="t s" style="top:849.28px;right:1191.70px;transform-origin:100% 50%;transform:scaleX(1.339);font-size:9.2px;line-height:10.58px;color:#1a1a1a">(16.000.000)</div>
<div class="t s" style="top:849.28px;right:1101.00px;transform-origin:100% 50%;transform:scaleX(1.339);font-size:9.2px;line-height:10.58px;color:#4a4a4a">-</div>
<div class="t s" style="top:849.28px;right:1010.64px;transform-origin:100% 50%;transform:scaleX(1.339);font-size:9.2px;line-height:10.58px;color:#4a4a4a">-</div>
<div class="t s" style="top:849.28px;right:920.28px;transform-origin:100% 50%;transform:scaleX(1.339);font-size:9.2px;line-height:10.58px;color:#4a4a4a">-</div>
<div class="t s" style="top:849.28px;right:829.92px;transform-origin:100% 50%;transform:scaleX(1.339);font-size:9.2px;line-height:10.58px;color:#4a4a4a">-</div>
<div class="t s" style="top:849.28px;right:739.56px;transform-origin:100% 50%;transform:scaleX(1.339);font-size:9.2px;line-height:10.58px;color:#4a4a4a">-</div>
<div class="t s" style="top:849.28px;right:649.20px;transform-origin:100% 50%;transform:scaleX(1.339);font-size:9.2px;line-height:10.58px;color:#4a4a4a">-</div>
<div class="t s" style="top:849.28px;right:558.84px;transform-origin:100% 50%;transform:scaleX(1.339);font-size:9.2px;line-height:10.58px;color:#4a4a4a">-</div>
<div class="t s" style="top:849.28px;right:468.48px;transform-origin:100% 50%;transform:scaleX(1.339);font-size:9.2px;line-height:10.58px;color:#4a4a4a">-</div>
<div class="t s" style="top:849.28px;right:378.12px;transform-origin:100% 50%;transform:scaleX(1.339);font-size:9.2px;line-height:10.58px;color:#4a4a4a">-</div>
<div class="t s" style="top:849.28px;right:287.76px;transform-origin:100% 50%;transform:scaleX(1.339);font-size:9.2px;line-height:10.58px;color:#4a4a4a">-</div>
<div class="t s" style="top:849.28px;right:197.40px;transform-origin:100% 50%;transform:scaleX(1.339);font-size:9.2px;line-height:10.58px;color:#4a4a4a">-</div>
<div class="t s" style="top:849.28px;right:107.04px;transform-origin:100% 50%;transform:scaleX(1.339);font-size:9.2px;line-height:10.58px;color:#4a4a4a">-</div>
<div class="t s" style="top:849.28px;right:17.00px;transform-origin:100% 50%;transform:scaleX(1.339);font-size:9.2px;line-height:10.58px;color:#4a4a4a">-</div>
<div class="t s" style="top:865.43px;left:42.00px;transform-origin:0 50%;transform:scaleX(1.200);font-size:9.6px;line-height:11.04px;color:#1a1a1a;letter-spacing:0.5px">Controlling Infrastructure</div>
<div class="t s" style="top:865.80px;right:1191.70px;transform-origin:100% 50%;transform:scaleX(1.339);font-size:9.2px;line-height:10.58px;color:#1a1a1a">(1.900.000)</div>
<div class="t s" style="top:865.80px;right:1101.00px;transform-origin:100% 50%;transform:scaleX(1.339);font-size:9.2px;line-height:10.58px;color:#4a4a4a">-</div>
<div class="t s" style="top:865.80px;right:1010.64px;transform-origin:100% 50%;transform:scaleX(1.339);font-size:9.2px;line-height:10.58px;color:#4a4a4a">-</div>
<div class="t s" style="top:865.80px;right:920.28px;transform-origin:100% 50%;transform:scaleX(1.339);font-size:9.2px;line-height:10.58px;color:#4a4a4a">-</div>
<div class="t s" style="top:865.80px;right:829.92px;transform-origin:100% 50%;transform:scaleX(1.339);font-size:9.2px;line-height:10.58px;color:#4a4a4a">-</div>
<div class="t s" style="top:865.80px;right:739.56px;transform-origin:100% 50%;transform:scaleX(1.339);font-size:9.2px;line-height:10.58px;color:#4a4a4a">-</div>
<div class="t s" style="top:865.80px;right:649.20px;transform-origin:100% 50%;transform:scaleX(1.339);font-size:9.2px;line-height:10.58px;color:#4a4a4a">-</div>
<div class="t s" style="top:865.80px;right:558.84px;transform-origin:100% 50%;transform:scaleX(1.339);font-size:9.2px;line-height:10.58px;color:#4a4a4a">-</div>
<div class="t s" style="top:865.80px;right:468.48px;transform-origin:100% 50%;transform:scaleX(1.339);font-size:9.2px;line-height:10.58px;color:#4a4a4a">-</div>
<div class="t s" style="top:865.80px;right:378.12px;transform-origin:100% 50%;transform:scaleX(1.339);font-size:9.2px;line-height:10.58px;color:#4a4a4a">-</div>
<div class="t s" style="top:865.80px;right:287.76px;transform-origin:100% 50%;transform:scaleX(1.339);font-size:9.2px;line-height:10.58px;color:#4a4a4a">-</div>
<div class="t s" style="top:865.80px;right:197.40px;transform-origin:100% 50%;transform:scaleX(1.339);font-size:9.2px;line-height:10.58px;color:#4a4a4a">-</div>
<div class="t s" style="top:865.80px;right:107.04px;transform-origin:100% 50%;transform:scaleX(1.339);font-size:9.2px;line-height:10.58px;color:#4a4a4a">-</div>
<div class="t s" style="top:865.80px;right:17.00px;transform-origin:100% 50%;transform:scaleX(1.339);font-size:9.2px;line-height:10.58px;color:#4a4a4a">-</div>
<div class="t s" style="top:881.95px;left:42.00px;transform-origin:0 50%;transform:scaleX(1.190);font-size:9.6px;line-height:11.04px;color:#1a1a1a;letter-spacing:0.5px">Computers & IT Equipment</div>
<div class="t s" style="top:882.32px;right:1191.70px;transform-origin:100% 50%;transform:scaleX(1.339);font-size:9.2px;line-height:10.58px;color:#1a1a1a">(1.060.000)</div>
<div class="t s" style="top:882.32px;right:1101.00px;transform-origin:100% 50%;transform:scaleX(1.339);font-size:9.2px;line-height:10.58px;color:#4a4a4a">-</div>
<div class="t s" style="top:882.32px;right:1010.64px;transform-origin:100% 50%;transform:scaleX(1.339);font-size:9.2px;line-height:10.58px;color:#4a4a4a">-</div>
<div class="t s" style="top:882.32px;right:920.28px;transform-origin:100% 50%;transform:scaleX(1.339);font-size:9.2px;line-height:10.58px;color:#4a4a4a">-</div>
<div class="t s" style="top:882.32px;right:829.92px;transform-origin:100% 50%;transform:scaleX(1.339);font-size:9.2px;line-height:10.58px;color:#4a4a4a">-</div>
<div class="t s" style="top:882.32px;right:739.56px;transform-origin:100% 50%;transform:scaleX(1.339);font-size:9.2px;line-height:10.58px;color:#4a4a4a">-</div>
<div class="t s" style="top:882.32px;right:649.20px;transform-origin:100% 50%;transform:scaleX(1.339);font-size:9.2px;line-height:10.58px;color:#4a4a4a">-</div>
<div class="t s" style="top:882.32px;right:558.84px;transform-origin:100% 50%;transform:scaleX(1.339);font-size:9.2px;line-height:10.58px;color:#4a4a4a">-</div>
<div class="t s" style="top:882.32px;right:468.48px;transform-origin:100% 50%;transform:scaleX(1.339);font-size:9.2px;line-height:10.58px;color:#4a4a4a">-</div>
<div class="t s" style="top:882.32px;right:378.12px;transform-origin:100% 50%;transform:scaleX(1.339);font-size:9.2px;line-height:10.58px;color:#4a4a4a">-</div>
<div class="t s" style="top:882.32px;right:287.76px;transform-origin:100% 50%;transform:scaleX(1.339);font-size:9.2px;line-height:10.58px;color:#4a4a4a">-</div>
<div class="t s" style="top:882.32px;right:197.40px;transform-origin:100% 50%;transform:scaleX(1.339);font-size:9.2px;line-height:10.58px;color:#4a4a4a">-</div>
<div class="t s" style="top:882.32px;right:107.04px;transform-origin:100% 50%;transform:scaleX(1.339);font-size:9.2px;line-height:10.58px;color:#4a4a4a">-</div>
<div class="t s" style="top:882.32px;right:17.00px;transform-origin:100% 50%;transform:scaleX(1.339);font-size:9.2px;line-height:10.58px;color:#4a4a4a">-</div>
<div class="t s" style="top:898.47px;left:42.00px;transform-origin:0 50%;transform:scaleX(1.136);font-size:9.6px;line-height:11.04px;color:#1a1a1a;letter-spacing:0.5px">Soft Costs - Technical Consultancy</div>
<div class="t s" style="top:898.84px;right:1191.70px;transform-origin:100% 50%;transform:scaleX(1.339);font-size:9.2px;line-height:10.58px;color:#1a1a1a">(760.000)</div>
<div class="t s" style="top:898.84px;right:1101.00px;transform-origin:100% 50%;transform:scaleX(1.339);font-size:9.2px;line-height:10.58px;color:#4a4a4a">-</div>
<div class="t s" style="top:898.84px;right:1010.64px;transform-origin:100% 50%;transform:scaleX(1.339);font-size:9.2px;line-height:10.58px;color:#4a4a4a">-</div>
<div class="t s" style="top:898.84px;right:920.28px;transform-origin:100% 50%;transform:scaleX(1.339);font-size:9.2px;line-height:10.58px;color:#4a4a4a">-</div>
<div class="t s" style="top:898.84px;right:829.92px;transform-origin:100% 50%;transform:scaleX(1.339);font-size:9.2px;line-height:10.58px;color:#4a4a4a">-</div>
<div class="t s" style="top:898.84px;right:739.56px;transform-origin:100% 50%;transform:scaleX(1.339);font-size:9.2px;line-height:10.58px;color:#4a4a4a">-</div>
<div class="t s" style="top:898.84px;right:649.20px;transform-origin:100% 50%;transform:scaleX(1.339);font-size:9.2px;line-height:10.58px;color:#4a4a4a">-</div>
<div class="t s" style="top:898.84px;right:558.84px;transform-origin:100% 50%;transform:scaleX(1.339);font-size:9.2px;line-height:10.58px;color:#4a4a4a">-</div>
<div class="t s" style="top:898.84px;right:468.48px;transform-origin:100% 50%;transform:scaleX(1.339);font-size:9.2px;line-height:10.58px;color:#4a4a4a">-</div>
<div class="t s" style="top:898.84px;right:378.12px;transform-origin:100% 50%;transform:scaleX(1.339);font-size:9.2px;line-height:10.58px;color:#4a4a4a">-</div>
<div class="t s" style="top:898.84px;right:287.76px;transform-origin:100% 50%;transform:scaleX(1.339);font-size:9.2px;line-height:10.58px;color:#4a4a4a">-</div>
<div class="t s" style="top:898.84px;right:197.40px;transform-origin:100% 50%;transform:scaleX(1.339);font-size:9.2px;line-height:10.58px;color:#4a4a4a">-</div>
<div class="t s" style="top:898.84px;right:107.04px;transform-origin:100% 50%;transform:scaleX(1.339);font-size:9.2px;line-height:10.58px;color:#4a4a4a">-</div>
<div class="t s" style="top:898.84px;right:17.00px;transform-origin:100% 50%;transform:scaleX(1.339);font-size:9.2px;line-height:10.58px;color:#4a4a4a">-</div>
<div class="t" style="top:914.99px;left:33.00px;transform-origin:0 50%;transform:scaleX(1.103);font-size:9.6px;line-height:11.04px;color:#1a1a1a;font-weight:bold;letter-spacing:0.5px">Total Capital Expenditures</div>
<div class="t" style="top:915.36px;right:1191.70px;transform-origin:100% 50%;transform:scaleX(1.309);font-size:9.2px;line-height:10.58px;color:#1a1a1a;font-weight:bold">(46.760.000)</div>
<div class="t" style="top:915.36px;right:1101.00px;transform-origin:100% 50%;transform:scaleX(1.309);font-size:9.2px;line-height:10.58px;color:#1a1a1a;font-weight:bold">-</div>
<div class="t" style="top:915.36px;right:1010.64px;transform-origin:100% 50%;transform:scaleX(1.309);font-size:9.2px;line-height:10.58px;color:#1a1a1a;font-weight:bold">-</div>
<div class="t" style="top:915.36px;right:920.28px;transform-origin:100% 50%;transform:scaleX(1.309);font-size:9.2px;line-height:10.58px;color:#1a1a1a;font-weight:bold">-</div>
<div class="t" style="top:915.36px;right:829.92px;transform-origin:100% 50%;transform:scaleX(1.309);font-size:9.2px;line-height:10.58px;color:#1a1a1a;font-weight:bold">-</div>
<div class="t" style="top:915.36px;right:739.56px;transform-origin:100% 50%;transform:scaleX(1.309);font-size:9.2px;line-height:10.58px;color:#1a1a1a;font-weight:bold">-</div>
<div class="t" style="top:915.36px;right:649.20px;transform-origin:100% 50%;transform:scaleX(1.309);font-size:9.2px;line-height:10.58px;color:#1a1a1a;font-weight:bold">-</div>
<div class="t" style="top:915.36px;right:558.84px;transform-origin:100% 50%;transform:scaleX(1.309);font-size:9.2px;line-height:10.58px;color:#1a1a1a;font-weight:bold">-</div>
<div class="t" style="top:915.36px;right:468.48px;transform-origin:100% 50%;transform:scaleX(1.309);font-size:9.2px;line-height:10.58px;color:#1a1a1a;font-weight:bold">-</div>
<div class="t" style="top:915.36px;right:378.12px;transform-origin:100% 50%;transform:scaleX(1.309);font-size:9.2px;line-height:10.58px;color:#1a1a1a;font-weight:bold">-</div>
<div class="t" style="top:915.36px;right:287.76px;transform-origin:100% 50%;transform:scaleX(1.309);font-size:9.2px;line-height:10.58px;color:#1a1a1a;font-weight:bold">-</div>
<div class="t" style="top:915.36px;right:197.40px;transform-origin:100% 50%;transform:scaleX(1.309);font-size:9.2px;line-height:10.58px;color:#1a1a1a;font-weight:bold">-</div>
<div class="t" style="top:915.36px;right:107.04px;transform-origin:100% 50%;transform:scaleX(1.309);font-size:9.2px;line-height:10.58px;color:#1a1a1a;font-weight:bold">-</div>
<div class="t" style="top:915.36px;right:17.00px;transform-origin:100% 50%;transform:scaleX(1.309);font-size:9.2px;line-height:10.58px;color:#1a1a1a;font-weight:bold">-</div>
<div class="t" style="top:948.03px;left:33.00px;transform-origin:0 50%;transform:scaleX(1.114);font-size:9.6px;line-height:11.04px;color:#1a1a1a;font-weight:bold;letter-spacing:0.5px">Net Cash Flow before Debt</div>
<div class="t" style="top:948.40px;right:1191.70px;transform-origin:100% 50%;transform:scaleX(1.309);font-size:9.2px;line-height:10.58px;color:#1a1a1a;font-weight:bold">(47.070.000)</div>
<div class="t" style="top:948.40px;right:1101.00px;transform-origin:100% 50%;transform:scaleX(1.309);font-size:9.2px;line-height:10.58px;color:#1a1a1a;font-weight:bold">452.380</div>
<div class="t" style="top:948.40px;right:1010.64px;transform-origin:100% 50%;transform:scaleX(1.309);font-size:9.2px;line-height:10.58px;color:#1a1a1a;font-weight:bold">452.380</div>
<div class="t" style="top:948.40px;right:920.28px;transform-origin:100% 50%;transform:scaleX(1.309);font-size:9.2px;line-height:10.58px;color:#1a1a1a;font-weight:bold">585.830</div>
<div class="t" style="top:948.40px;right:829.92px;transform-origin:100% 50%;transform:scaleX(1.309);font-size:9.2px;line-height:10.58px;color:#1a1a1a;font-weight:bold">719.280</div>
<div class="t" style="top:948.40px;right:739.56px;transform-origin:100% 50%;transform:scaleX(1.309);font-size:9.2px;line-height:10.58px;color:#1a1a1a;font-weight:bold">1.119.630</div>
<div class="t" style="top:948.40px;right:649.20px;transform-origin:100% 50%;transform:scaleX(1.309);font-size:9.2px;line-height:10.58px;color:#1a1a1a;font-weight:bold">852.730</div>
<div class="t" style="top:948.40px;right:558.84px;transform-origin:100% 50%;transform:scaleX(1.309);font-size:9.2px;line-height:10.58px;color:#1a1a1a;font-weight:bold">852.730</div>
<div class="t" style="top:948.40px;right:468.48px;transform-origin:100% 50%;transform:scaleX(1.309);font-size:9.2px;line-height:10.58px;color:#1a1a1a;font-weight:bold">585.830</div>
<div class="t" style="top:948.40px;right:378.12px;transform-origin:100% 50%;transform:scaleX(1.309);font-size:9.2px;line-height:10.58px;color:#1a1a1a;font-weight:bold">852.730</div>
<div class="t" style="top:948.40px;right:287.76px;transform-origin:100% 50%;transform:scaleX(1.309);font-size:9.2px;line-height:10.58px;color:#1a1a1a;font-weight:bold">719.280</div>
<div class="t" style="top:948.40px;right:197.40px;transform-origin:100% 50%;transform:scaleX(1.309);font-size:9.2px;line-height:10.58px;color:#1a1a1a;font-weight:bold">1.786.880</div>
<div class="t" style="top:948.40px;right:107.04px;transform-origin:100% 50%;transform:scaleX(1.309);font-size:9.2px;line-height:10.58px;color:#1a1a1a;font-weight:bold">1.786.880</div>
<div class="t" style="top:948.40px;right:17.00px;transform-origin:100% 50%;transform:scaleX(1.309);font-size:9.2px;line-height:10.58px;color:#1a1a1a;font-weight:bold">10.766.565</div>
<div class="t" style="top:981.07px;left:33.00px;transform-origin:0 50%;transform:scaleX(1.086);font-size:9.6px;line-height:11.04px;color:#111;font-weight:bold;letter-spacing:0.5px">Financing</div>
<div class="t s" style="top:997.59px;left:42.00px;transform-origin:0 50%;transform:scaleX(1.133);font-size:9.6px;line-height:11.04px;color:#1a1a1a;letter-spacing:0.5px">Loan Proceeds</div>
<div class="t s" style="top:997.96px;right:1191.70px;transform-origin:100% 50%;transform:scaleX(1.339);font-size:9.2px;line-height:10.58px;color:#1a1a1a">30.394.000</div>
<div class="t s" style="top:997.96px;right:1101.00px;transform-origin:100% 50%;transform:scaleX(1.339);font-size:9.2px;line-height:10.58px;color:#4a4a4a">-</div>
<div class="t s" style="top:997.96px;right:1010.64px;transform-origin:100% 50%;transform:scaleX(1.339);font-size:9.2px;line-height:10.58px;color:#4a4a4a">-</div>
<div class="t s" style="top:997.96px;right:920.28px;transform-origin:100% 50%;transform:scaleX(1.339);font-size:9.2px;line-height:10.58px;color:#4a4a4a">-</div>
<div class="t s" style="top:997.96px;right:829.92px;transform-origin:100% 50%;transform:scaleX(1.339);font-size:9.2px;line-height:10.58px;color:#4a4a4a">-</div>
<div class="t s" style="top:997.96px;right:739.56px;transform-origin:100% 50%;transform:scaleX(1.339);font-size:9.2px;line-height:10.58px;color:#4a4a4a">-</div>
<div class="t s" style="top:997.96px;right:649.20px;transform-origin:100% 50%;transform:scaleX(1.339);font-size:9.2px;line-height:10.58px;color:#4a4a4a">-</div>
<div class="t s" style="top:997.96px;right:558.84px;transform-origin:100% 50%;transform:scaleX(1.339);font-size:9.2px;line-height:10.58px;color:#4a4a4a">-</div>
<div class="t s" style="top:997.96px;right:468.48px;transform-origin:100% 50%;transform:scaleX(1.339);font-size:9.2px;line-height:10.58px;color:#4a4a4a">-</div>
<div class="t s" style="top:997.96px;right:378.12px;transform-origin:100% 50%;transform:scaleX(1.339);font-size:9.2px;line-height:10.58px;color:#4a4a4a">-</div>
<div class="t s" style="top:997.96px;right:287.76px;transform-origin:100% 50%;transform:scaleX(1.339);font-size:9.2px;line-height:10.58px;color:#4a4a4a">-</div>
<div class="t s" style="top:997.96px;right:197.40px;transform-origin:100% 50%;transform:scaleX(1.339);font-size:9.2px;line-height:10.58px;color:#4a4a4a">-</div>
<div class="t s" style="top:997.96px;right:107.04px;transform-origin:100% 50%;transform:scaleX(1.339);font-size:9.2px;line-height:10.58px;color:#4a4a4a">-</div>
<div class="t s" style="top:997.96px;right:17.00px;transform-origin:100% 50%;transform:scaleX(1.339);font-size:9.2px;line-height:10.58px;color:#4a4a4a">-</div>
<div class="t s" style="top:1014.11px;left:42.00px;transform-origin:0 50%;transform:scaleX(1.229);font-size:9.6px;line-height:11.04px;color:#1a1a1a;letter-spacing:0.5px">Interest</div>
<div class="t s" style="top:1014.48px;right:1191.70px;transform-origin:100% 50%;transform:scaleX(1.339);font-size:9.2px;line-height:10.58px;color:#4a4a4a">-</div>
<div class="t s" style="top:1014.48px;right:1101.00px;transform-origin:100% 50%;transform:scaleX(1.339);font-size:9.2px;line-height:10.58px;color:#1a1a1a">(113.978)</div>
<div class="t s" style="top:1014.48px;right:1010.64px;transform-origin:100% 50%;transform:scaleX(1.339);font-size:9.2px;line-height:10.58px;color:#1a1a1a">(113.978)</div>
<div class="t s" style="top:1014.48px;right:920.28px;transform-origin:100% 50%;transform:scaleX(1.339);font-size:9.2px;line-height:10.58px;color:#1a1a1a">(113.978)</div>
<div class="t s" style="top:1014.48px;right:829.92px;transform-origin:100% 50%;transform:scaleX(1.339);font-size:9.2px;line-height:10.58px;color:#1a1a1a">(113.978)</div>
<div class="t s" style="top:1014.48px;right:739.56px;transform-origin:100% 50%;transform:scaleX(1.339);font-size:9.2px;line-height:10.58px;color:#1a1a1a">(113.978)</div>
<div class="t s" style="top:1014.48px;right:649.20px;transform-origin:100% 50%;transform:scaleX(1.339);font-size:9.2px;line-height:10.58px;color:#1a1a1a">(113.978)</div>
<div class="t s" style="top:1014.48px;right:558.84px;transform-origin:100% 50%;transform:scaleX(1.339);font-size:9.2px;line-height:10.58px;color:#1a1a1a">(113.978)</div>
<div class="t s" style="top:1014.48px;right:468.48px;transform-origin:100% 50%;transform:scaleX(1.339);font-size:9.2px;line-height:10.58px;color:#1a1a1a">(113.978)</div>
<div class="t s" style="top:1014.48px;right:378.12px;transform-origin:100% 50%;transform:scaleX(1.339);font-size:9.2px;line-height:10.58px;color:#1a1a1a">(113.978)</div>
<div class="t s" style="top:1014.48px;right:287.76px;transform-origin:100% 50%;transform:scaleX(1.339);font-size:9.2px;line-height:10.58px;color:#1a1a1a">(113.978)</div>
<div class="t s" style="top:1014.48px;right:197.40px;transform-origin:100% 50%;transform:scaleX(1.339);font-size:9.2px;line-height:10.58px;color:#1a1a1a">(113.978)</div>
<div class="t s" style="top:1014.48px;right:107.04px;transform-origin:100% 50%;transform:scaleX(1.339);font-size:9.2px;line-height:10.58px;color:#1a1a1a">(113.978)</div>
<div class="t s" style="top:1014.48px;right:17.00px;transform-origin:100% 50%;transform:scaleX(1.339);font-size:9.2px;line-height:10.58px;color:#1a1a1a">(1.367.730)</div>
<div class="t s" style="top:1030.63px;left:42.00px;transform-origin:0 50%;transform:scaleX(1.170);font-size:9.6px;line-height:11.04px;color:#1a1a1a;letter-spacing:0.5px">Principal</div>
<div class="t s" style="top:1031.00px;right:1191.70px;transform-origin:100% 50%;transform:scaleX(1.339);font-size:9.2px;line-height:10.58px;color:#4a4a4a">-</div>
<div class="t s" style="top:1031.00px;right:1101.00px;transform-origin:100% 50%;transform:scaleX(1.339);font-size:9.2px;line-height:10.58px;color:#4a4a4a">-</div>
<div class="t s" style="top:1031.00px;right:1010.64px;transform-origin:100% 50%;transform:scaleX(1.339);font-size:9.2px;line-height:10.58px;color:#4a4a4a">-</div>
<div class="t s" style="top:1031.00px;right:920.28px;transform-origin:100% 50%;transform:scaleX(1.339);font-size:9.2px;line-height:10.58px;color:#4a4a4a">-</div>
<div class="t s" style="top:1031.00px;right:829.92px;transform-origin:100% 50%;transform:scaleX(1.339);font-size:9.2px;line-height:10.58px;color:#4a4a4a">-</div>
<div class="t s" style="top:1031.00px;right:739.56px;transform-origin:100% 50%;transform:scaleX(1.339);font-size:9.2px;line-height:10.58px;color:#4a4a4a">-</div>
<div class="t s" style="top:1031.00px;right:649.20px;transform-origin:100% 50%;transform:scaleX(1.339);font-size:9.2px;line-height:10.58px;color:#4a4a4a">-</div>
<div class="t s" style="top:1031.00px;right:558.84px;transform-origin:100% 50%;transform:scaleX(1.339);font-size:9.2px;line-height:10.58px;color:#4a4a4a">-</div>
<div class="t s" style="top:1031.00px;right:468.48px;transform-origin:100% 50%;transform:scaleX(1.339);font-size:9.2px;line-height:10.58px;color:#4a4a4a">-</div>
<div class="t s" style="top:1031.00px;right:378.12px;transform-origin:100% 50%;transform:scaleX(1.339);font-size:9.2px;line-height:10.58px;color:#4a4a4a">-</div>
<div class="t s" style="top:1031.00px;right:287.76px;transform-origin:100% 50%;transform:scaleX(1.339);font-size:9.2px;line-height:10.58px;color:#4a4a4a">-</div>
<div class="t s" style="top:1031.00px;right:197.40px;transform-origin:100% 50%;transform:scaleX(1.339);font-size:9.2px;line-height:10.58px;color:#4a4a4a">-</div>
<div class="t s" style="top:1031.00px;right:107.04px;transform-origin:100% 50%;transform:scaleX(1.339);font-size:9.2px;line-height:10.58px;color:#4a4a4a">-</div>
<div class="t s" style="top:1031.00px;right:17.00px;transform-origin:100% 50%;transform:scaleX(1.339);font-size:9.2px;line-height:10.58px;color:#4a4a4a">-</div>
<div class="t" style="top:1047.15px;left:33.00px;transform-origin:0 50%;transform:scaleX(1.107);font-size:9.6px;line-height:11.04px;color:#1a1a1a;font-weight:bold;letter-spacing:0.5px">Total Debt Financing</div>
<div class="t" style="top:1047.52px;right:1191.70px;transform-origin:100% 50%;transform:scaleX(1.309);font-size:9.2px;line-height:10.58px;color:#1a1a1a;font-weight:bold">30.394.000</div>
<div class="t" style="top:1047.52px;right:1101.00px;transform-origin:100% 50%;transform:scaleX(1.309);font-size:9.2px;line-height:10.58px;color:#1a1a1a;font-weight:bold">(113.978)</div>
<div class="t" style="top:1047.52px;right:1010.64px;transform-origin:100% 50%;transform:scaleX(1.309);font-size:9.2px;line-height:10.58px;color:#1a1a1a;font-weight:bold">(113.978)</div>
<div class="t" style="top:1047.52px;right:920.28px;transform-origin:100% 50%;transform:scaleX(1.309);font-size:9.2px;line-height:10.58px;color:#1a1a1a;font-weight:bold">(113.978)</div>
<div class="t" style="top:1047.52px;right:829.92px;transform-origin:100% 50%;transform:scaleX(1.309);font-size:9.2px;line-height:10.58px;color:#1a1a1a;font-weight:bold">(113.978)</div>
<div class="t" style="top:1047.52px;right:739.56px;transform-origin:100% 50%;transform:scaleX(1.309);font-size:9.2px;line-height:10.58px;color:#1a1a1a;font-weight:bold">(113.978)</div>
<div class="t" style="top:1047.52px;right:649.20px;transform-origin:100% 50%;transform:scaleX(1.309);font-size:9.2px;line-height:10.58px;color:#1a1a1a;font-weight:bold">(113.978)</div>
<div class="t" style="top:1047.52px;right:558.84px;transform-origin:100% 50%;transform:scaleX(1.309);font-size:9.2px;line-height:10.58px;color:#1a1a1a;font-weight:bold">(113.978)</div>
<div class="t" style="top:1047.52px;right:468.48px;transform-origin:100% 50%;transform:scaleX(1.309);font-size:9.2px;line-height:10.58px;color:#1a1a1a;font-weight:bold">(113.978)</div>
<div class="t" style="top:1047.52px;right:378.12px;transform-origin:100% 50%;transform:scaleX(1.309);font-size:9.2px;line-height:10.58px;color:#1a1a1a;font-weight:bold">(113.978)</div>
<div class="t" style="top:1047.52px;right:287.76px;transform-origin:100% 50%;transform:scaleX(1.309);font-size:9.2px;line-height:10.58px;color:#1a1a1a;font-weight:bold">(113.978)</div>
<div class="t" style="top:1047.52px;right:197.40px;transform-origin:100% 50%;transform:scaleX(1.309);font-size:9.2px;line-height:10.58px;color:#1a1a1a;font-weight:bold">(113.978)</div>
<div class="t" style="top:1047.52px;right:107.04px;transform-origin:100% 50%;transform:scaleX(1.309);font-size:9.2px;line-height:10.58px;color:#1a1a1a;font-weight:bold">(113.978)</div>
<div class="t" style="top:1047.52px;right:17.00px;transform-origin:100% 50%;transform:scaleX(1.309);font-size:9.2px;line-height:10.58px;color:#1a1a1a;font-weight:bold">(1.367.730)</div>
<div class="t" style="top:1080.19px;left:33.00px;transform-origin:0 50%;transform:scaleX(1.116);font-size:9.6px;line-height:11.04px;color:#1a1a1a;font-weight:bold;letter-spacing:0.5px">Net Cash Flow after Debt</div>
<div class="t" style="top:1080.56px;right:1191.70px;transform-origin:100% 50%;transform:scaleX(1.309);font-size:9.2px;line-height:10.58px;color:#1a1a1a;font-weight:bold">(16.676.000)</div>
<div class="t" style="top:1080.56px;right:1101.00px;transform-origin:100% 50%;transform:scaleX(1.309);font-size:9.2px;line-height:10.58px;color:#1a1a1a;font-weight:bold">338.403</div>
<div class="t" style="top:1080.56px;right:1010.64px;transform-origin:100% 50%;transform:scaleX(1.309);font-size:9.2px;line-height:10.58px;color:#1a1a1a;font-weight:bold">338.403</div>
<div class="t" style="top:1080.56px;right:920.28px;transform-origin:100% 50%;transform:scaleX(1.309);font-size:9.2px;line-height:10.58px;color:#1a1a1a;font-weight:bold">471.853</div>
<div class="t" style="top:1080.56px;right:829.92px;transform-origin:100% 50%;transform:scaleX(1.309);font-size:9.2px;line-height:10.58px;color:#1a1a1a;font-weight:bold">605.303</div>
<div class="t" style="top:1080.56px;right:739.56px;transform-origin:100% 50%;transform:scaleX(1.309);font-size:9.2px;line-height:10.58px;color:#1a1a1a;font-weight:bold">1.005.653</div>
<div class="t" style="top:1080.56px;right:649.20px;transform-origin:100% 50%;transform:scaleX(1.309);font-size:9.2px;line-height:10.58px;color:#1a1a1a;font-weight:bold">738.753</div>
<div class="t" style="top:1080.56px;right:558.84px;transform-origin:100% 50%;transform:scaleX(1.309);font-size:9.2px;line-height:10.58px;color:#1a1a1a;font-weight:bold">738.753</div>
<div class="t" style="top:1080.56px;right:468.48px;transform-origin:100% 50%;transform:scaleX(1.309);font-size:9.2px;line-height:10.58px;color:#1a1a1a;font-weight:bold">471.853</div>
<div class="t" style="top:1080.56px;right:378.12px;transform-origin:100% 50%;transform:scaleX(1.309);font-size:9.2px;line-height:10.58px;color:#1a1a1a;font-weight:bold">738.753</div>
<div class="t" style="top:1080.56px;right:287.76px;transform-origin:100% 50%;transform:scaleX(1.309);font-size:9.2px;line-height:10.58px;color:#1a1a1a;font-weight:bold">605.303</div>
<div class="t" style="top:1080.56px;right:197.40px;transform-origin:100% 50%;transform:scaleX(1.309);font-size:9.2px;line-height:10.58px;color:#1a1a1a;font-weight:bold">1.672.903</div>
<div class="t" style="top:1080.56px;right:107.04px;transform-origin:100% 50%;transform:scaleX(1.309);font-size:9.2px;line-height:10.58px;color:#1a1a1a;font-weight:bold">1.672.903</div>
<div class="t" style="top:1080.56px;right:17.00px;transform-origin:100% 50%;transform:scaleX(1.309);font-size:9.2px;line-height:10.58px;color:#1a1a1a;font-weight:bold">9.398.835</div>
<div class="t s" style="top:1113.23px;left:42.00px;transform-origin:0 50%;transform:scaleX(1.186);font-size:9.6px;line-height:11.04px;color:#1a1a1a;letter-spacing:0.5px">Income Taxes</div>
<div class="t s" style="top:1113.60px;right:1191.70px;transform-origin:100% 50%;transform:scaleX(1.339);font-size:9.2px;line-height:10.58px;color:#4a4a4a">-</div>
<div class="t s" style="top:1113.60px;right:1101.00px;transform-origin:100% 50%;transform:scaleX(1.339);font-size:9.2px;line-height:10.58px;color:#4a4a4a">-</div>
<div class="t s" style="top:1113.60px;right:1010.64px;transform-origin:100% 50%;transform:scaleX(1.339);font-size:9.2px;line-height:10.58px;color:#4a4a4a">-</div>
<div class="t s" style="top:1113.60px;right:920.28px;transform-origin:100% 50%;transform:scaleX(1.339);font-size:9.2px;line-height:10.58px;color:#4a4a4a">-</div>
<div class="t s" style="top:1113.60px;right:829.92px;transform-origin:100% 50%;transform:scaleX(1.339);font-size:9.2px;line-height:10.58px;color:#4a4a4a">-</div>
<div class="t s" style="top:1113.60px;right:739.56px;transform-origin:100% 50%;transform:scaleX(1.339);font-size:9.2px;line-height:10.58px;color:#4a4a4a">-</div>
<div class="t s" style="top:1113.60px;right:649.20px;transform-origin:100% 50%;transform:scaleX(1.339);font-size:9.2px;line-height:10.58px;color:#4a4a4a">-</div>
<div class="t s" style="top:1113.60px;right:558.84px;transform-origin:100% 50%;transform:scaleX(1.339);font-size:9.2px;line-height:10.58px;color:#4a4a4a">-</div>
<div class="t s" style="top:1113.60px;right:468.48px;transform-origin:100% 50%;transform:scaleX(1.339);font-size:9.2px;line-height:10.58px;color:#4a4a4a">-</div>
<div class="t s" style="top:1113.60px;right:378.12px;transform-origin:100% 50%;transform:scaleX(1.339);font-size:9.2px;line-height:10.58px;color:#4a4a4a">-</div>
<div class="t s" style="top:1113.60px;right:287.76px;transform-origin:100% 50%;transform:scaleX(1.339);font-size:9.2px;line-height:10.58px;color:#4a4a4a">-</div>
<div class="t s" style="top:1113.60px;right:197.40px;transform-origin:100% 50%;transform:scaleX(1.339);font-size:9.2px;line-height:10.58px;color:#4a4a4a">-</div>
<div class="t s" style="top:1113.60px;right:107.04px;transform-origin:100% 50%;transform:scaleX(1.339);font-size:9.2px;line-height:10.58px;color:#1a1a1a">(1.307.423)</div>
<div class="t s" style="top:1113.60px;right:17.00px;transform-origin:100% 50%;transform:scaleX(1.339);font-size:9.2px;line-height:10.58px;color:#1a1a1a">(1.307.423)</div>
<div class="t" style="top:1146.27px;left:33.00px;transform-origin:0 50%;transform:scaleX(1.114);font-size:9.6px;line-height:11.04px;color:#1a1a1a;font-weight:bold;letter-spacing:0.5px">Net Cash Flow after Tax</div>
<div class="t" style="top:1146.64px;right:1191.70px;transform-origin:100% 50%;transform:scaleX(1.309);font-size:9.2px;line-height:10.58px;color:#1a1a1a;font-weight:bold">(16.676.000)</div>
<div class="t" style="top:1146.64px;right:1101.00px;transform-origin:100% 50%;transform:scaleX(1.309);font-size:9.2px;line-height:10.58px;color:#1a1a1a;font-weight:bold">338.403</div>
<div class="t" style="top:1146.64px;right:1010.64px;transform-origin:100% 50%;transform:scaleX(1.309);font-size:9.2px;line-height:10.58px;color:#1a1a1a;font-weight:bold">338.403</div>
<div class="t" style="top:1146.64px;right:920.28px;transform-origin:100% 50%;transform:scaleX(1.309);font-size:9.2px;line-height:10.58px;color:#1a1a1a;font-weight:bold">471.853</div>
<div class="t" style="top:1146.64px;right:829.92px;transform-origin:100% 50%;transform:scaleX(1.309);font-size:9.2px;line-height:10.58px;color:#1a1a1a;font-weight:bold">605.303</div>
<div class="t" style="top:1146.64px;right:739.56px;transform-origin:100% 50%;transform:scaleX(1.309);font-size:9.2px;line-height:10.58px;color:#1a1a1a;font-weight:bold">1.005.653</div>
<div class="t" style="top:1146.64px;right:649.20px;transform-origin:100% 50%;transform:scaleX(1.309);font-size:9.2px;line-height:10.58px;color:#1a1a1a;font-weight:bold">738.753</div>
<div class="t" style="top:1146.64px;right:558.84px;transform-origin:100% 50%;transform:scaleX(1.309);font-size:9.2px;line-height:10.58px;color:#1a1a1a;font-weight:bold">738.753</div>
<div class="t" style="top:1146.64px;right:468.48px;transform-origin:100% 50%;transform:scaleX(1.309);font-size:9.2px;line-height:10.58px;color:#1a1a1a;font-weight:bold">471.853</div>
<div class="t" style="top:1146.64px;right:378.12px;transform-origin:100% 50%;transform:scaleX(1.309);font-size:9.2px;line-height:10.58px;color:#1a1a1a;font-weight:bold">738.753</div>
<div class="t" style="top:1146.64px;right:287.76px;transform-origin:100% 50%;transform:scaleX(1.309);font-size:9.2px;line-height:10.58px;color:#1a1a1a;font-weight:bold">605.303</div>
<div class="t" style="top:1146.64px;right:197.40px;transform-origin:100% 50%;transform:scaleX(1.309);font-size:9.2px;line-height:10.58px;color:#1a1a1a;font-weight:bold">1.672.903</div>
<div class="t" style="top:1146.64px;right:107.04px;transform-origin:100% 50%;transform:scaleX(1.309);font-size:9.2px;line-height:10.58px;color:#1a1a1a;font-weight:bold">365.480</div>
<div class="t" style="top:1146.64px;right:17.00px;transform-origin:100% 50%;transform:scaleX(1.309);font-size:9.2px;line-height:10.58px;color:#1a1a1a;font-weight:bold">8.091.412</div>
</body></html>
